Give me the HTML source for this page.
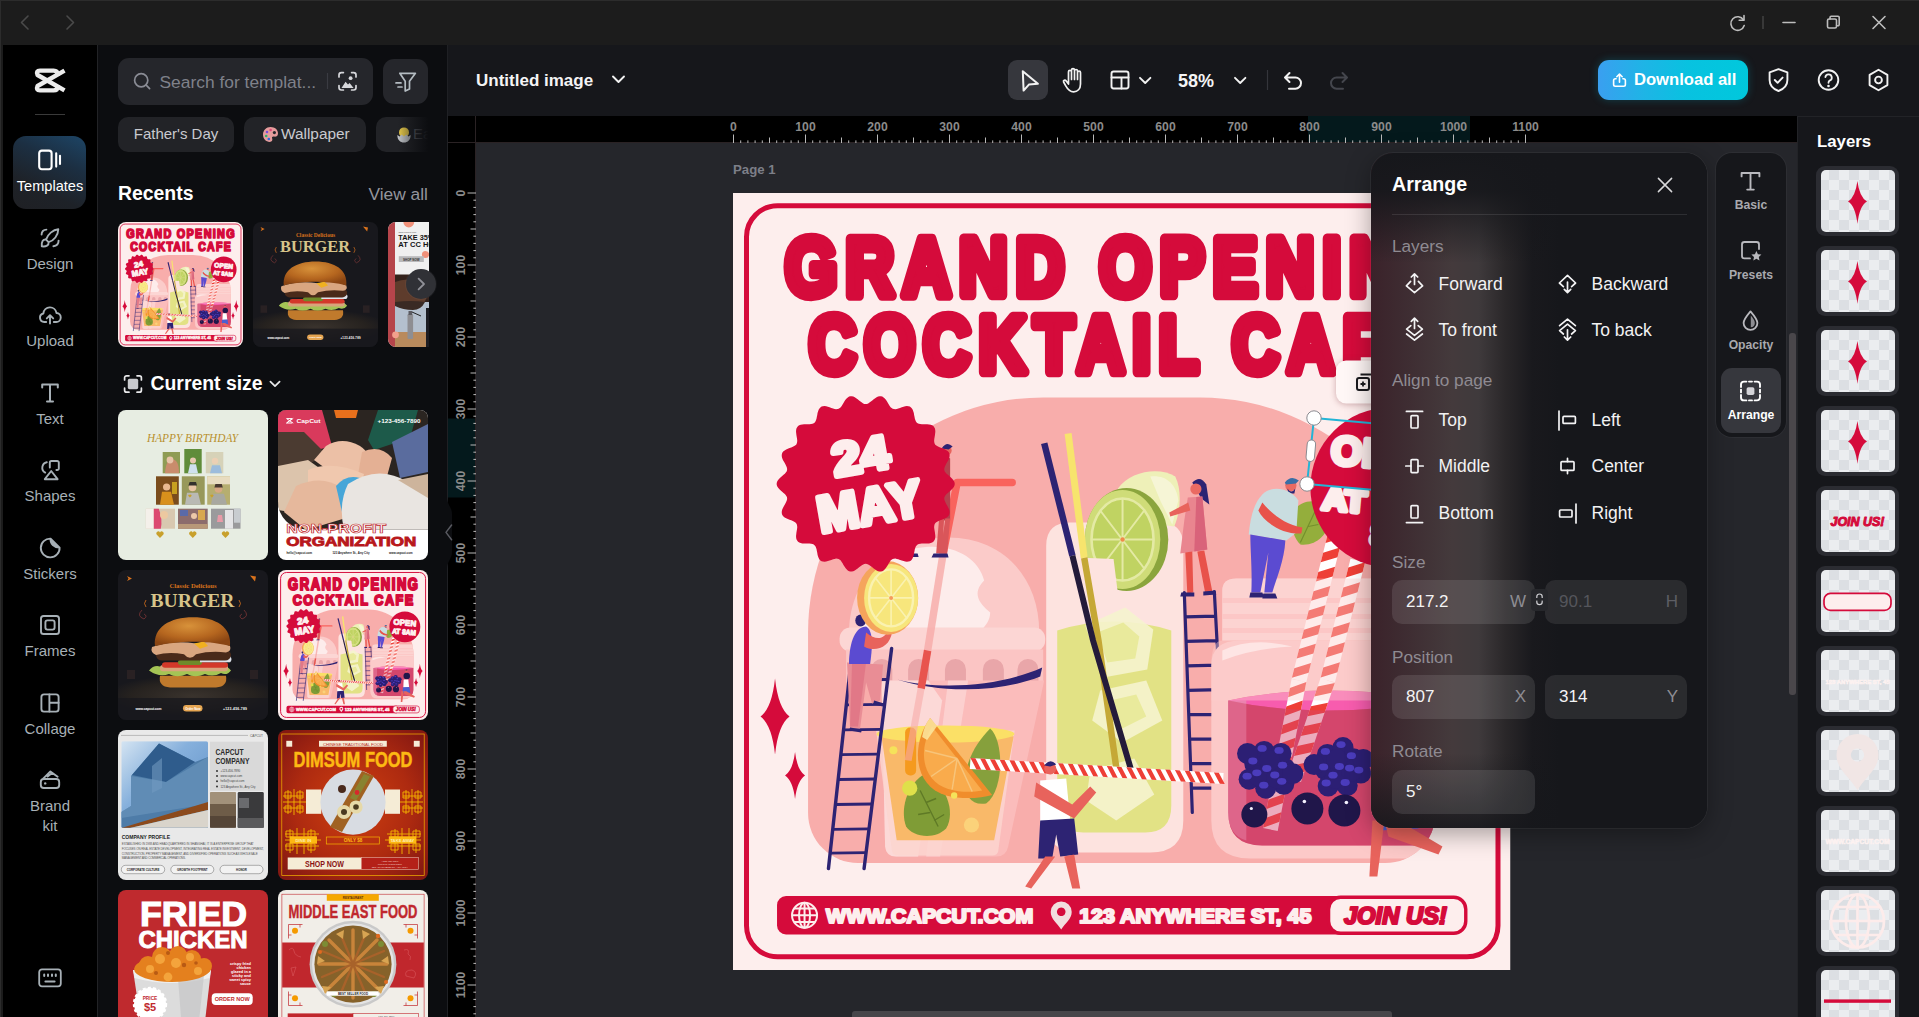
<!DOCTYPE html>
<html lang="en">
<head>
<meta charset="utf-8">
<title>Untitled image</title>
<style>
*{box-sizing:border-box;margin:0;padding:0}
html,body{width:1919px;height:1017px;overflow:hidden;background:#1c1c1c}
body{position:relative;font-family:"Liberation Sans",sans-serif;color:#fff}
.abs{position:absolute}
svg{display:block;overflow:visible}
#titlebar{left:0;top:0;width:1919px;height:45px;background:#1c1c1c;border-top:1px solid #2c2c2c}
#winl{left:0;top:0;width:1px;height:1017px;background:#2c2c2c}
#nav{left:3px;top:45px;width:94px;height:972px;background:#000}
#navb{left:97px;top:45px;width:1px;height:972px;background:#222326}
#tpl{left:98px;top:45px;width:349px;height:972px;background:#0c0d10;overflow:hidden}
#tplb{left:447px;top:45px;width:1px;height:972px;background:#1f2024}
#toolbar{left:448px;top:45px;width:1471px;height:71px;background:#16171b}
#hruler{left:448px;top:116px;width:1349px;height:27px;background:#000;overflow:hidden}
#vruler{left:448px;top:143px;width:28px;height:874px;background:#000;overflow:hidden}
#canvas{left:476px;top:143px;width:1321px;height:874px;background:#25262b;overflow:hidden}
#layers{left:1797px;top:116px;width:122px;height:901px;background:#16171b;border-left:1px solid #222327;border-top:1px solid #222327;overflow:hidden}
.navi{position:absolute;left:0;width:94px;text-align:center;font-size:15px;line-height:20px;color:#a7b0b6}
.navi svg{position:absolute;left:35px;top:-28px}
.ic{fill:none;stroke:#fff;stroke-width:1.8;stroke-linecap:round;stroke-linejoin:round}
.icg{fill:none;stroke:#a7b0b6;stroke-width:1.9;stroke-linecap:round;stroke-linejoin:round}
.chip{position:absolute;top:72px;height:35px;border-radius:10px;background:#222327;color:#c9cacf;font-size:15px;line-height:34px;white-space:nowrap}
.thumb{position:absolute;border-radius:8px;overflow:hidden}
.lt{position:absolute;left:18px;width:83px;height:70px;border-radius:9px;background:#2b2c32}
.lt i{position:absolute;left:4.5px;top:4px;width:74px;height:61.5px;border-radius:5px;overflow:hidden;background-color:#ebedf0;background-image:conic-gradient(#dcdfe3 25%,#ebedf0 0 50%,#dcdfe3 0 75%,#ebedf0 0);background-size:20px 20px;background-position:-2px 0}
.arow{position:absolute;font-size:17.5px;color:#f2f2f3;white-space:nowrap;line-height:24px}
.albl{position:absolute;left:21px;font-size:17.2px;color:#8f8b92;line-height:22px}
.ainp{position:absolute;width:143px;height:44px;border-radius:10px;background:rgba(255,255,255,.105);font-size:17px;line-height:44px;padding-left:14px;color:#f4f4f5}
.ainp b{position:absolute;right:9px;top:0;font-weight:400;color:#8e8d93;font-size:17px}
.stab{position:absolute;left:0;width:70px;text-align:center;font-size:12.2px;font-weight:700;color:#a9a9ae;line-height:16px}
</style>
</head>
<body>
<svg width="0" height="0" style="position:absolute"><defs>
<clipPath id="pclip"><rect width="777" height="777"/></clipPath>
<clipPath id="archclip"><path d="M75 439.5 A235 235 0 0 1 310 204.5 H467 A235 235 0 0 1 702 439.5 V620 A50 50 0 0 1 652 670 H125 A50 50 0 0 1 75 620Z"/></clipPath>
<symbol id="poster" viewBox="0 0 777 777"><g clip-path="url(#pclip)" font-family="Liberation Sans,sans-serif" font-weight="700">
<rect width="777" height="777" fill="#fdeeed"/>
<rect x="13.5" y="12.8" width="751" height="751" rx="31" fill="none" stroke="#d50b3b" stroke-width="5"/>
<path d="M75 439.5 A235 235 0 0 1 310 204.5 H467 A235 235 0 0 1 702 439.5 V620 A50 50 0 0 1 652 670 H125 A50 50 0 0 1 75 620Z" fill="#f8adab"/>
<g clip-path="url(#archclip)">
<path d="M116.0 439.5 C116.0 379.5 165.0 344.5 215.0 344.5 C267.0 344.5 306.0 381.5 306.0 439.5Z" fill="#fbcbc9"/>
<path d="M129.0 447.5 C119.0 403.5 143.0 363.5 182.0 355.5 C217.0 348.5 245.0 363.5 251.0 387.5 C239.0 399.5 245.0 409.5 257.0 419.5 C257.0 433.5 242.0 441.5 233.0 449.5Z" fill="#fdeceb"/>
<rect x="106.5" y="434.5" width="205.5" height="24" rx="11" fill="#fcd6d4"/>
<rect x="113" y="456.5" width="197" height="33" fill="#fbc5c4"/>
<path d="M138.2 489.5 V476.5 a10.5 10.5 0 0 1 21 0 V489.5Z M175.0 489.5 V476.5 a10.5 10.5 0 0 1 21 0 V489.5Z M211.8 489.5 V476.5 a10.5 10.5 0 0 1 21 0 V489.5Z M249.7 489.5 V476.5 a10.5 10.5 0 0 1 21 0 V489.5Z M284.3 489.5 V476.5 a10.5 10.5 0 0 1 21 0 V489.5Z " fill="#e9a6a9"/>
<path d="M148.4 487.5 L311.0 487.5 L275.0 653.5 Q273.0 663.5 263.0 663.5 L163.0 663.5 Q153.0 663.5 152.0 653.5Z" fill="#fbbcbb"/>
<path d="M148.4 487.5 L195.0 487.5 L209.0 507.5 L185.0 663.5 L163.0 663.5 Q153.0 663.5 152.0 653.5Z" fill="#fcd9d7"/>
<path d="M215.0 487.5 L235.0 487.5 L207.0 663.5 L193.0 663.5Z" fill="#fcd9d7" opacity=".7"/>
<path d="M164.0 486.5 C207.0 497.5 267.0 493.5 309.0 474.5 L307.0 483.5 C267.0 499.5 207.0 500.5 164.0 486.5Z" fill="#2d2373"/>
<path d="M143.0 537.5 L281.5 537.5 L265.0 658.5 Q264.0 662.5 259.0 662.5 L165.0 662.5 Q160.0 662.5 159.0 658.5Z" fill="#fcd5cf" opacity=".85"/>
<path d="M148.4 543.3 L280.5 543.3 L261.0 647.2 L163.6 647.2Z" fill="#f9b969"/>
<ellipse cx="212.29999999999995" cy="541.0" rx="69" ry="8.6" fill="#fbe066"/>
<path d="M257.0 535.5 C271.0 547.5 271.0 597.5 253.0 610.5 C235.0 613.5 229.0 597.5 233.0 577.5 C237.0 559.5 247.0 545.5 257.0 535.5Z" fill="#86a03c"/>
<rect x="172" y="534.5" width="11" height="48" rx="5" fill="#f59a1e"/>
<path d="M189.0 582.5 C213.0 587.5 223.0 619.5 213.0 635.5 C201.0 647.5 179.0 643.5 173.0 633.5 C167.0 617.5 173.0 593.5 189.0 582.5Z" fill="#7f9c36"/>
<path d="M187.0 597.5 L205.0 633.5 M193.0 609.5 l10 -4 M197.0 619.5 l-12 2 M201.0 627.5 l10 -6" stroke="#5f7a26" stroke-width="1.4" fill="none"/>
<path d="M197.0 524.9 C177.0 552.5 181.0 593.5 213.0 602.5 C229.0 606.5 247.0 605.5 259.0 602.0Z" fill="#f08d2c"/>
<path d="M199.0 533.5 C185.0 555.5 188.0 587.5 215.0 596.0 C227.0 599.5 239.0 599.5 249.0 597.5Z" fill="#f9ab4c"/>
<path d="M224.0 565.5 L192.0 557.5 M224.0 565.5 L198.0 583.5 M224.0 565.5 L219.0 596.5 M224.0 565.5 L239.0 598.5" stroke="#f7c47a" stroke-width="1.5" fill="none"/>
<path d="M197.0 524.9 l7 8 l-10 14 l-5 -3 q2 -12 8 -19Z" fill="#fce7a0" opacity=".85"/>
<circle cx="160.29999999999995" cy="557.3" r="4" fill="#f5e25a"/><circle cx="176.60000000000002" cy="595.2" r="7.6" fill="#dfe04a"/><circle cx="221" cy="602.5" r="3.2" fill="#f5e25a"/><circle cx="238.29999999999995" cy="632.0" r="7.6" fill="#fbd27a"/>
<path d="M279.0 289.5 H224 L210.0 360.5" fill="none" stroke="#f9635d" stroke-width="7.5" stroke-linecap="round" stroke-linejoin="round"/>
<path d="M210.0 360.5 L194.5 457.5" fill="none" stroke="#f6aaa8" stroke-width="7.5" opacity=".8"/>
<path d="M194.5 457.5 L188.0 495.5" fill="none" stroke="#e8544e" stroke-width="7.5"/>
<path d="M188.0 495.5 L175.0 567.5" fill="none" stroke="#f6aaa8" stroke-width="7" opacity=".6"/>
<path d="M313.0 352.5 Q313.0 329.5 337.0 329.5 H427 Q450 329.5 450 352.5 V627.5 Q450 659.5 417 659.5 H347 Q313 659.5 313 627.5Z" fill="#fde3df"/>
<path d="M324.0 437.5 Q381.0 419.5 438.0 437.5 V612.5 Q438 639.5 412 639.5 H350 Q324 639.5 324 612.5Z" fill="#e2e285"/>
<g fill="#f6f4cf" opacity=".9"><path d="M352.0 432.5 l40 -18 l28 22 l-6 40 l-44 8Z"/><path d="M367.0 497.5 l46 -10 l16 40 l-40 22 l-30 -22Z"/><path d="M357.0 577.5 l44 -12 l20 36 l-38 26 l-30 -20Z"/></g>
<g fill="#e9ea9c"><path d="M364.0 439.5 l26 -10 l16 14 l-4 22 l-28 4Z"/><path d="M377.0 507.5 l26 -6 l10 22 l-24 12 l-16 -12Z"/></g>
<path d="M384.7 295.5 C397.0 277.5 427.0 273.5 442.0 283.5 C449.0 297.5 447.0 319.5 441.0 333.5 L397.0 327.5Z" fill="#eef0b8"/>
<path d="M417.0 283.5 C431.0 281.5 443.0 289.5 445.0 307.5 L439.0 331.5 L427.0 307.5Z" fill="#f6f5d6"/>
<ellipse cx="393.29999999999995" cy="346.5" rx="41.7" ry="51.4" fill="#8ba53d"/>
<ellipse cx="389.29999999999995" cy="346.5" rx="37.7" ry="49.4" fill="#cfdc78"/>
<ellipse cx="389.29999999999995" cy="346.5" rx="31" ry="41" fill="#c0d362" stroke="#e4eaa4" stroke-width="2.6"/>
<path d="M389.3 305.5 V387.5 M358.0 346.5 H420 M367.0 317.5 L411.0 375.5 M411.0 317.5 L367.0 375.5" stroke="#e4eaa4" stroke-width="2"/>
<circle cx="389.29999999999995" cy="346.5" r="2.2" fill="#f08a4a"/>
<path d="M343.0 364.5 L380.3 366.0 L385.0 403.5 L343.0 403.5Z" fill="#fde3df"/>
<path d="M334.9 240.5 L351.0 364.9" stroke="#f7e46d" stroke-width="7"/>
<path d="M351.0 364.9 L365.2 447.5 L383.0 574.5" stroke="#c5a836" stroke-width="6.5" fill="none"/>
<path d="M311.0 250.2 L339.2 362.8" stroke="#2d2373" stroke-width="6.5"/>
<path d="M339.2 362.8 L359.8 447.5 L398.0 577.5" stroke="#241b3a" stroke-width="6" fill="none"/>
<g><path d="M459.0 289.5 q8 -8 14 2 l3 20 l-8 -6Z" fill="#2d2373"/><circle cx="462.5999999999999" cy="296.0" r="5.6" fill="#ea6a62"/><path d="M454.5 304.5 L469.0 303.5 L474.0 356.5 L447.0 360.5 L451.0 327.5Z" fill="#e9858f"/><path d="M463.0 304.0 L469.0 303.5 L474.0 356.5 L461.0 358.5Z" fill="#d9637a"/><path d="M455.0 309.5 L436.0 319.5 l1 4 l20 -6Z" fill="#e8635c"/><path d="M452.0 359.5 l7 -1 l1 41 l-6 1Z M464.0 358.5 l7 -1 l8 41 l-7 2Z" fill="#e8524a"/><path d="M448.0 399.5 l13 0 l0 4 l-14 0Z M470.0 398.5 l12 -1 l1 4 l-13 1Z" fill="#2d2373"/></g>
<g stroke="#2d2373" stroke-width="3.2" stroke-linecap="round" fill="none"><path d="M459.0 619.5 L451.0 399.5 M493.0 619.5 L481.0 398.5 M458.1 595.1 L491.7 594.9 M457.2 570.6 L490.3 570.4 M456.3 546.2 L489.0 545.8 M455.4 521.7 L487.7 521.3 M454.6 497.3 L486.3 496.7 M453.7 472.8 L485.0 472.2 M452.8 448.4 L483.7 447.6 M451.9 423.9 L482.3 423.1"/></g>
<path d="M489.0 397.5 Q489.0 385.5 503.0 385.5 H707 V447.5 H489Z" fill="#fcd6d4"/>
<path d="M489.0 407.5 H707 M489.0 423.5 H707 M489.0 437.5 H707" stroke="#fbc2c1" stroke-width="5"/>
<path d="M478.0 472.5 Q478.0 447.5 507.0 447.5 H717 V665.5 H517 Q478 665.5 478 627.5Z" fill="#fcc9c8"/>
<path d="M495.0 507.5 Q587.0 487.5 707.0 507.5 V652.5 H529 Q495 652.5 495 619.5Z" fill="#d4466c"/>
<path d="M495.0 507.5 Q587.0 487.5 707.0 507.5 Q587.0 527.5 495.0 507.5Z" fill="#f75cae"/>
<path d="M495.0 507.5 h18 V647.5 Q495 642.5 495 619.5Z" fill="#e88db0" opacity=".8"/>
<path d="M489.0 457.5 q30 -14 70 -4 q-40 2 -70 14Z" fill="#fff" opacity=".8"/>
<g transform="translate(604.0,333.5) rotate(104.00)" opacity="1"><rect x="0" y="-7.5" width="158.7" height="15" fill="#fff"/><path d="M0.0 -7.5 l9.9 0 l9.0 15 l-9.9 0Z M19.8 -7.5 l9.9 0 l9.0 15 l-9.9 0Z M39.7 -7.5 l9.9 0 l9.0 15 l-9.9 0Z M59.5 -7.5 l9.9 0 l9.0 15 l-9.9 0Z M79.4 -7.5 l9.9 0 l9.0 15 l-9.9 0Z M99.2 -7.5 l9.9 0 l9.0 15 l-9.9 0Z M119.0 -7.5 l9.9 0 l9.0 15 l-9.9 0Z M138.9 -7.5 l9.9 0 l9.0 15 l-9.9 0Z " fill="#ee3f36"/></g>
<g transform="translate(565.6,487.5) rotate(100.87)" opacity="1"><rect x="0" y="-7.5" width="151.7" height="15" fill="#fff"/><path d="M0.0 -7.5 l9.5 0 l9.0 15 l-9.5 0Z M19.0 -7.5 l9.5 0 l9.0 15 l-9.5 0Z M37.9 -7.5 l9.5 0 l9.0 15 l-9.5 0Z M56.9 -7.5 l9.5 0 l9.0 15 l-9.5 0Z M75.9 -7.5 l9.5 0 l9.0 15 l-9.5 0Z M94.8 -7.5 l9.5 0 l9.0 15 l-9.5 0Z M113.8 -7.5 l9.5 0 l9.0 15 l-9.5 0Z M132.8 -7.5 l9.5 0 l9.0 15 l-9.5 0Z " fill="#ee3f36"/></g>
<g transform="translate(624.4,367.5) rotate(104.08)" opacity="1"><rect x="0" y="-7.5" width="123.7" height="15" fill="#fff"/><path d="M0.0 -7.5 l10.3 0 l9.0 15 l-10.3 0Z M20.6 -7.5 l10.3 0 l9.0 15 l-10.3 0Z M41.2 -7.5 l10.3 0 l9.0 15 l-10.3 0Z M61.9 -7.5 l10.3 0 l9.0 15 l-10.3 0Z M82.5 -7.5 l10.3 0 l9.0 15 l-10.3 0Z M103.1 -7.5 l10.3 0 l9.0 15 l-10.3 0Z " fill="#ee3f36"/></g>
<g transform="translate(594.3,487.5) rotate(108.85)" opacity="1"><rect x="0" y="-7.5" width="104.6" height="15" fill="#fff"/><path d="M0.0 -7.5 l10.5 0 l9.0 15 l-10.5 0Z M20.9 -7.5 l10.5 0 l9.0 15 l-10.5 0Z M41.8 -7.5 l10.5 0 l9.0 15 l-10.5 0Z M62.8 -7.5 l10.5 0 l9.0 15 l-10.5 0Z M83.7 -7.5 l10.5 0 l9.0 15 l-10.5 0Z " fill="#ee3f36"/></g>
<path d="M489.0 397.5 Q489.0 385.5 503.0 385.5 H707 V507.5 H478 V472.5 Q478.0 447.5 489.0 447.5Z" fill="#fcd0ce" opacity=".42"/>
<path d="M495.0 507.5 Q587.0 527.5 707.0 507.5 V652.5 H529 Q495 652.5 495 619.5Z" fill="#d4466c" opacity=".45"/>
<g fill="#2c1f74"><circle cx="535.4" cy="578.5" r="10.5"/><circle cx="521.5" cy="571.0" r="10.5"/><circle cx="551.2" cy="575.2" r="10.5"/><circle cx="530.8" cy="558.4" r="10.5"/><circle cx="547.7" cy="560.4" r="10.5"/><circle cx="515.8" cy="586.2" r="10.5"/><circle cx="550.4" cy="591.3" r="10.5"/><circle cx="532.4" cy="595.2" r="10.5"/><circle cx="525.5" cy="582.8" r="10.5"/><circle cx="543.4" cy="585.0" r="10.5"/><circle cx="536.3" cy="567.5" r="10.5"/><circle cx="514.2" cy="560.5" r="10.5"/><circle cx="559.4" cy="580.7" r="10.5"/></g><g fill="#4b3cbc"><ellipse cx="533.4" cy="575.5" rx="4.6" ry="3.4"/><ellipse cx="519.5" cy="568.0" rx="4.6" ry="3.4"/><ellipse cx="549.2" cy="572.2" rx="4.6" ry="3.4"/><ellipse cx="528.8" cy="555.4" rx="4.6" ry="3.4"/><ellipse cx="545.7" cy="557.4" rx="4.6" ry="3.4"/><ellipse cx="513.8" cy="583.2" rx="4.6" ry="3.4"/><ellipse cx="548.4" cy="588.3" rx="4.6" ry="3.4"/><ellipse cx="530.4" cy="592.2" rx="4.6" ry="3.4"/><ellipse cx="523.5" cy="579.8" rx="4.6" ry="3.4"/><ellipse cx="541.4" cy="582.0" rx="4.6" ry="3.4"/></g>
<g fill="#2c1f74"><circle cx="608.0" cy="576.5" r="10.5"/><circle cx="592.2" cy="576.9" r="10.5"/><circle cx="620.0" cy="565.7" r="10.5"/><circle cx="594.0" cy="561.4" r="10.5"/><circle cx="609.6" cy="554.6" r="10.5"/><circle cx="594.8" cy="593.0" r="10.5"/><circle cx="627.4" cy="580.1" r="10.5"/><circle cx="613.8" cy="592.5" r="10.5"/><circle cx="601.6" cy="585.2" r="10.5"/><circle cx="618.2" cy="578.1" r="10.5"/><circle cx="603.3" cy="566.5" r="10.5"/><circle cx="580.7" cy="571.6" r="10.5"/><circle cx="629.9" cy="566.4" r="10.5"/></g><g fill="#4b3cbc"><ellipse cx="606.0" cy="573.5" rx="4.6" ry="3.4"/><ellipse cx="590.2" cy="573.9" rx="4.6" ry="3.4"/><ellipse cx="618.0" cy="562.7" rx="4.6" ry="3.4"/><ellipse cx="592.0" cy="558.4" rx="4.6" ry="3.4"/><ellipse cx="607.6" cy="551.6" rx="4.6" ry="3.4"/><ellipse cx="592.8" cy="590.0" rx="4.6" ry="3.4"/><ellipse cx="625.4" cy="577.1" rx="4.6" ry="3.4"/><ellipse cx="611.8" cy="589.5" rx="4.6" ry="3.4"/><ellipse cx="599.6" cy="582.2" rx="4.6" ry="3.4"/><ellipse cx="616.2" cy="575.1" rx="4.6" ry="3.4"/></g>
<g fill="#20164a"><circle cx="521" cy="621.5" r="13"/><circle cx="574" cy="615.5" r="16"/><circle cx="611" cy="617.5" r="16"/></g>
<g fill="#f4f2ff"><circle cx="518" cy="615.5" r="1.6"/><circle cx="571" cy="608.5" r="1.8"/><circle cx="613" cy="609.5" r="1.8"/></g>
<g><path d="M559.0 319.5 C567.0 305.5 589.0 303.5 595.0 319.5 C599.0 337.5 585.0 353.5 567.0 351.5 C559.0 343.5 557.0 331.5 559.0 319.5Z" fill="#94ae3c"/><path d="M567.0 349.5 L583.0 315.5 M575.0 333.5 l10 -2" stroke="#74902c" stroke-width="1.2" fill="none"/><circle cx="557.5" cy="292.5" r="5.6" fill="#ea6a62"/><path d="M551.5 289.5 q6 -8 14 -2 l-3 3 l-10 1Z" fill="#3a6ea5"/><path d="M554.0 295.5 q4 6 8 0 l-1 5 l-6 0Z" fill="#2d2373"/><path d="M529.0 301.5 C539.0 291.5 557.0 295.5 565.0 307.5 L563.0 339.5 L553.0 347.5 L515.4 341.5 C517.0 323.5 521.0 309.5 529.0 301.5Z" fill="#c9dde0"/><path d="M529.0 309.5 C537.0 319.5 551.0 331.5 569.0 334.5 l-1 6 C549.0 341.5 531.0 329.5 525.0 317.5Z" fill="#e8524a"/><path d="M517.0 341.5 L552.0 347.5 C551.0 367.5 543.0 385.5 539.0 399.5 L531.0 399.5 L535.0 359.5 L527.0 399.5 L518.0 399.5 C519.0 377.5 517.0 357.5 517.0 341.5Z" fill="#5b4bd1"/><path d="M517.0 399.5 l12 0 l2 5 l-15 0Z M530.0 400.5 l12 0 l2 5 l-15 0Z" fill="#2d2373"/></g>
</g>
<path d="M95.4 675.5 L118.6 462.5 M131.0 675.5 L158.5 455.5" stroke="#2d2373" stroke-width="3.4" stroke-linecap="round" fill="none"/>
<path d="M115.9 487.0 L154.5 486.5 M113.2 511.9 L151.4 511.4 M110.5 536.8 L148.3 536.3 M107.8 561.7 L145.2 561.2 M105.1 586.5 L142.1 586.0 M102.3 611.5 L139.0 611.0 M99.6 636.3 L135.9 635.8 M97.1 660.1 L132.9 659.6 " stroke="#2d2373" stroke-width="2.8" fill="none"/>
<g><path d="M114.0 469.5 L150.0 471.5 L147.0 507.5 L139.0 510.5 L133.0 489.5 L127.0 535.5 L117.0 535.5 Z" fill="#e98d95"/><path d="M119.0 469.5 l14 0 l-8 64 l-8 0Z" fill="#dc6a7e" opacity=".6"/><path d="M116.0 471.0 C116.0 447.5 123.0 433.5 133.0 433.5 C141.0 437.5 139.0 457.5 137.0 471.0Z" fill="#5b4bd1"/><path d="M133.0 439.5 C143.0 447.5 151.0 447.5 156.0 435.5 l3 3 C157.0 455.5 141.0 459.5 131.0 453.5Z" fill="#e8635c"/><ellipse cx="127.60000000000002" cy="427.5" rx="5.4" ry="6" fill="#2d2373"/><path d="M141.0 507.5 l10 3 l-1 3 l-10 -2Z M117.0 534.5 l12 2 l-1 3 l-12 -2Z" fill="#2d2373"/></g>
<ellipse cx="154.5" cy="404.9" rx="30.5" ry="36.8" fill="#f5a45c"/><ellipse cx="158" cy="404.9" rx="27" ry="34" fill="#f7e67c"/><ellipse cx="158" cy="404.9" rx="22" ry="28.5" fill="none" stroke="#faf2b0" stroke-width="2.4"/><path d="M158.0 376.5 V433.5 M136.0 404.9 H180 M142.0 384.5 L174.0 425.5 M174.0 384.5 L142.0 425.5" stroke="#faf2b0" stroke-width="1.6"/><circle cx="158" cy="404.9" r="2" fill="#f59a5a"/>
<g><path d="M206.0 265.5 q6 -4 11 0 l0 62 l-11 0Z" fill="#b5404e"/><path d="M206.0 325.5 l5 0 l-2 35 l-6 0Z M212.0 325.5 l5 0 l-3 35 l-6 0Z" fill="#d9565a"/><circle cx="213.5" cy="257.5" r="5" fill="#e8635c"/><path d="M208.5 255.5 q5 -8 11 -2 l-4 3Z" fill="#2d2373"/><path d="M170.5 360.5 l14 0 l1 3.6 l-17 0Z M200.4 360.5 l14 0 l1 4 l-17 0Z" fill="#2d2373"/></g>
<g transform="translate(237.0,570.5) rotate(3.39)" opacity="1"><rect x="0" y="-5.5" width="253.4" height="11" fill="#fff"/><path d="M0.0 -5.5 l4.9 0 l6.6 11 l-4.9 0Z M9.7 -5.5 l4.9 0 l6.6 11 l-4.9 0Z M19.5 -5.5 l4.9 0 l6.6 11 l-4.9 0Z M29.2 -5.5 l4.9 0 l6.6 11 l-4.9 0Z M39.0 -5.5 l4.9 0 l6.6 11 l-4.9 0Z M48.7 -5.5 l4.9 0 l6.6 11 l-4.9 0Z M58.5 -5.5 l4.9 0 l6.6 11 l-4.9 0Z M68.2 -5.5 l4.9 0 l6.6 11 l-4.9 0Z M78.0 -5.5 l4.9 0 l6.6 11 l-4.9 0Z M87.7 -5.5 l4.9 0 l6.6 11 l-4.9 0Z M97.5 -5.5 l4.9 0 l6.6 11 l-4.9 0Z M107.2 -5.5 l4.9 0 l6.6 11 l-4.9 0Z M117.0 -5.5 l4.9 0 l6.6 11 l-4.9 0Z M126.7 -5.5 l4.9 0 l6.6 11 l-4.9 0Z M136.5 -5.5 l4.9 0 l6.6 11 l-4.9 0Z M146.2 -5.5 l4.9 0 l6.6 11 l-4.9 0Z M156.0 -5.5 l4.9 0 l6.6 11 l-4.9 0Z M165.7 -5.5 l4.9 0 l6.6 11 l-4.9 0Z M175.5 -5.5 l4.9 0 l6.6 11 l-4.9 0Z M185.2 -5.5 l4.9 0 l6.6 11 l-4.9 0Z M195.0 -5.5 l4.9 0 l6.6 11 l-4.9 0Z M204.7 -5.5 l4.9 0 l6.6 11 l-4.9 0Z M214.5 -5.5 l4.9 0 l6.6 11 l-4.9 0Z M224.2 -5.5 l4.9 0 l6.6 11 l-4.9 0Z M233.9 -5.5 l4.9 0 l6.6 11 l-4.9 0Z M243.7 -5.5 l4.9 0 l6.6 11 l-4.9 0Z " fill="#ee3f36"/></g>
<g><circle cx="317" cy="575.5" r="6" fill="#e8635c"/><path d="M311.0 572.5 q6 -8 12 -1 l-6 2Z" fill="#2d2373"/><path d="M307.0 587.5 l26 -2 l4 42 l-30 2Z" fill="#fff"/><path d="M303.0 589.5 l36 22 l18 -18 l6 6 l-22 26 l-40 -22Z" fill="#e8635c"/><path d="M307.0 627.5 l34 -2 l4 36 l-18 2 l-4 -22 l-4 24 l-14 0Z" fill="#2d2373"/><path d="M312.0 663.5 l10 0 l-24 32 l-6 -2Z M331.0 663.5 l10 -2 l6 34 l-8 0Z" fill="#e8635c"/></g>
<g><circle cx="667" cy="549.5" r="17" fill="#20164a"/><circle cx="665" cy="523.5" r="7" fill="#e8635c"/><path d="M659.0 519.5 q6 -8 13 -1 l-6 2Z" fill="#2d2373"/><path d="M651.0 567.5 l24 0 l4 40 l-30 2Z" fill="#fff"/><path d="M647.0 607.5 l34 -2 l4 30 l-40 2Z" fill="#4b5fd0"/></g>
<g fill="#e8635c"><path d="M651.0 627.5 l14 0 l44 26 l-4 8 l-50 -18Z"/><path d="M639.0 627.5 l12 0 l-7 56 l-8 0Z"/></g>
<path d="M42 485.5 Q45.19 515.14 56.5 523.5 Q45.19 531.86 42 561.5 Q38.81 531.86 27.5 523.5 Q38.81 515.14 42 485.5Z" fill="#d50b3b"/><path d="M62 559.0 Q64.2 577.33 72 582.5 Q64.2 587.67 62 606.0 Q59.8 587.67 52 582.5 Q59.8 577.33 62 559.0Z" fill="#d50b3b"/>
<path d="M735 485.5 Q738.19 515.14 749.5 523.5 Q738.19 531.86 735 561.5 Q731.81 531.86 720.5 523.5 Q731.81 515.14 735 485.5Z" fill="#d50b3b"/><path d="M715 559.0 Q717.2 577.33 725 582.5 Q717.2 587.67 715 606.0 Q712.8 587.67 705 582.5 Q712.8 577.33 715 559.0Z" fill="#d50b3b"/>
<text x="392.5" y="102.3" font-size="82" letter-spacing="10" textLength="681" stroke="#d50b3b" stroke-width="10.5" stroke-linejoin="round" stroke-linecap="round" fill="#d50b3b" text-anchor="middle" lengthAdjust="spacingAndGlyphs">GRAND OPENING</text>
<text x="392.5" y="178.8" font-size="80" letter-spacing="10" textLength="633" stroke="#d50b3b" stroke-width="10.5" stroke-linejoin="round" stroke-linecap="round" fill="#d50b3b" text-anchor="middle" lengthAdjust="spacingAndGlyphs">COCKTAIL CAFE</text>
<path d="M221.6 290.9 L221.4 292.3 L220.8 293.7 L219.9 295.0 L218.8 296.3 L217.5 297.6 L216.1 298.8 L214.7 300.0 L213.4 301.1 L212.4 302.3 L211.6 303.4 L211.2 304.6 L211.1 305.9 L211.4 307.2 L211.9 308.6 L212.6 310.1 L213.5 311.7 L214.4 313.3 L215.3 314.9 L216.0 316.5 L216.4 318.1 L216.5 319.6 L216.3 321.0 L215.8 322.3 L214.8 323.5 L213.6 324.4 L212.1 325.3 L210.4 326.0 L208.7 326.7 L207.0 327.3 L205.4 328.0 L204.0 328.7 L202.8 329.5 L201.9 330.4 L201.4 331.6 L201.1 332.9 L201.0 334.3 L201.2 336.0 L201.5 337.7 L201.8 339.5 L202.0 341.3 L202.2 343.1 L202.1 344.8 L201.8 346.3 L201.1 347.6 L200.2 348.7 L199.0 349.5 L197.6 350.0 L195.9 350.4 L194.1 350.5 L192.3 350.6 L190.4 350.6 L188.7 350.6 L187.1 350.8 L185.7 351.1 L184.5 351.6 L183.5 352.4 L182.7 353.5 L182.2 354.8 L181.7 356.3 L181.4 358.0 L181.0 359.8 L180.7 361.7 L180.2 363.4 L179.6 365.0 L178.8 366.4 L177.9 367.4 L176.7 368.2 L175.3 368.6 L173.8 368.7 L172.1 368.5 L170.4 368.1 L168.7 367.5 L166.9 366.9 L165.2 366.3 L163.7 365.9 L162.2 365.6 L160.8 365.7 L159.6 366.0 L158.5 366.7 L157.5 367.6 L156.6 368.9 L155.7 370.3 L154.8 371.9 L153.8 373.5 L152.8 375.0 L151.7 376.3 L150.5 377.4 L149.2 378.2 L147.9 378.6 L146.5 378.6 L145.0 378.2 L143.5 377.5 L142.1 376.6 L140.6 375.5 L139.2 374.3 L137.8 373.2 L136.4 372.2 L135.1 371.4 L133.9 370.9 L132.6 370.7 L131.3 370.9 L130.1 371.4 L128.8 372.2 L127.4 373.2 L126.0 374.3 L124.6 375.5 L123.1 376.6 L121.7 377.5 L120.2 378.2 L118.7 378.6 L117.3 378.6 L116.0 378.2 L114.7 377.4 L113.5 376.3 L112.4 375.0 L111.4 373.5 L110.4 371.9 L109.5 370.3 L108.6 368.9 L107.7 367.6 L106.7 366.7 L105.6 366.0 L104.4 365.7 L103.0 365.6 L101.5 365.9 L100.0 366.3 L98.3 366.9 L96.5 367.5 L94.8 368.1 L93.1 368.5 L91.4 368.7 L89.9 368.6 L88.5 368.2 L87.3 367.4 L86.4 366.4 L85.6 365.0 L85.0 363.4 L84.5 361.7 L84.2 359.8 L83.8 358.0 L83.5 356.3 L83.0 354.8 L82.5 353.5 L81.7 352.4 L80.7 351.6 L79.5 351.1 L78.1 350.8 L76.5 350.6 L74.8 350.6 L72.9 350.6 L71.1 350.5 L69.3 350.4 L67.6 350.0 L66.2 349.5 L65.0 348.7 L64.1 347.6 L63.4 346.3 L63.1 344.8 L63.0 343.1 L63.2 341.3 L63.4 339.5 L63.7 337.7 L64.0 336.0 L64.2 334.3 L64.1 332.9 L63.8 331.6 L63.3 330.4 L62.4 329.5 L61.2 328.7 L59.8 328.0 L58.2 327.3 L56.5 326.7 L54.8 326.0 L53.1 325.3 L51.6 324.4 L50.4 323.5 L49.4 322.3 L48.9 321.0 L48.7 319.6 L48.8 318.1 L49.2 316.5 L49.9 314.9 L50.8 313.3 L51.7 311.7 L52.6 310.1 L53.3 308.6 L53.8 307.2 L54.1 305.9 L54.0 304.6 L53.6 303.4 L52.8 302.3 L51.8 301.1 L50.5 300.0 L49.1 298.8 L47.7 297.6 L46.4 296.3 L45.3 295.0 L44.4 293.7 L43.8 292.3 L43.6 290.9 L43.8 289.5 L44.4 288.1 L45.3 286.8 L46.4 285.5 L47.7 284.2 L49.1 283.0 L50.5 281.8 L51.8 280.7 L52.8 279.5 L53.6 278.4 L54.0 277.2 L54.1 275.9 L53.8 274.6 L53.3 273.2 L52.6 271.7 L51.7 270.1 L50.8 268.5 L49.9 266.9 L49.2 265.3 L48.8 263.7 L48.7 262.2 L48.9 260.8 L49.4 259.5 L50.4 258.3 L51.6 257.4 L53.1 256.5 L54.8 255.8 L56.5 255.1 L58.2 254.5 L59.8 253.8 L61.2 253.1 L62.4 252.3 L63.3 251.4 L63.8 250.2 L64.1 248.9 L64.2 247.5 L64.0 245.8 L63.7 244.1 L63.4 242.3 L63.2 240.5 L63.0 238.7 L63.1 237.0 L63.4 235.5 L64.1 234.2 L65.0 233.1 L66.2 232.3 L67.6 231.8 L69.3 231.4 L71.1 231.3 L72.9 231.2 L74.8 231.2 L76.5 231.2 L78.1 231.0 L79.5 230.7 L80.7 230.2 L81.7 229.4 L82.5 228.3 L83.0 227.0 L83.5 225.5 L83.8 223.8 L84.2 222.0 L84.5 220.1 L85.0 218.4 L85.6 216.8 L86.4 215.4 L87.3 214.4 L88.5 213.6 L89.9 213.2 L91.4 213.1 L93.1 213.3 L94.8 213.7 L96.5 214.3 L98.3 214.9 L100.0 215.5 L101.5 215.9 L103.0 216.2 L104.4 216.1 L105.6 215.8 L106.7 215.1 L107.7 214.2 L108.6 212.9 L109.5 211.5 L110.4 209.9 L111.4 208.3 L112.4 206.8 L113.5 205.5 L114.7 204.4 L116.0 203.6 L117.3 203.2 L118.7 203.2 L120.2 203.6 L121.7 204.3 L123.1 205.2 L124.6 206.3 L126.0 207.5 L127.4 208.6 L128.8 209.6 L130.1 210.4 L131.3 210.9 L132.6 211.1 L133.9 210.9 L135.1 210.4 L136.4 209.6 L137.8 208.6 L139.2 207.5 L140.6 206.3 L142.1 205.2 L143.5 204.3 L145.0 203.6 L146.5 203.2 L147.9 203.2 L149.2 203.6 L150.5 204.4 L151.7 205.5 L152.8 206.8 L153.8 208.3 L154.8 209.9 L155.7 211.5 L156.6 212.9 L157.5 214.2 L158.5 215.1 L159.6 215.8 L160.8 216.1 L162.2 216.2 L163.7 215.9 L165.2 215.5 L166.9 214.9 L168.7 214.3 L170.4 213.7 L172.1 213.3 L173.8 213.1 L175.3 213.2 L176.7 213.6 L177.9 214.4 L178.8 215.4 L179.6 216.8 L180.2 218.4 L180.7 220.1 L181.0 222.0 L181.4 223.8 L181.7 225.5 L182.2 227.0 L182.7 228.3 L183.5 229.4 L184.5 230.2 L185.7 230.7 L187.1 231.0 L188.7 231.2 L190.4 231.2 L192.3 231.2 L194.1 231.3 L195.9 231.4 L197.6 231.8 L199.0 232.3 L200.2 233.1 L201.1 234.2 L201.8 235.5 L202.1 237.0 L202.2 238.7 L202.0 240.5 L201.8 242.3 L201.5 244.1 L201.2 245.8 L201.0 247.5 L201.1 248.9 L201.4 250.2 L201.9 251.4 L202.8 252.3 L204.0 253.1 L205.4 253.8 L207.0 254.5 L208.7 255.1 L210.4 255.8 L212.1 256.5 L213.6 257.4 L214.8 258.3 L215.8 259.5 L216.3 260.8 L216.5 262.2 L216.4 263.7 L216.0 265.3 L215.3 266.9 L214.4 268.5 L213.5 270.1 L212.6 271.7 L211.9 273.2 L211.4 274.6 L211.1 275.9 L211.2 277.2 L211.6 278.4 L212.4 279.5 L213.4 280.7 L214.7 281.8 L216.1 283.0 L217.5 284.2 L218.8 285.5 L219.9 286.8 L220.8 288.1 L221.4 289.5Z" fill="#d50b3b"/>
<text transform="translate(127.5 262.9) rotate(-10)" x="0" y="16" font-size="46.5" textLength="57" stroke="#fdeeed" stroke-width="5.6" stroke-linejoin="round" fill="#fdeeed" text-anchor="middle" lengthAdjust="spacingAndGlyphs">24</text><text transform="translate(136.4 313.3) rotate(-10)" x="0" y="17.7" font-size="51.3" textLength="105" stroke="#fdeeed" stroke-width="5.6" stroke-linejoin="round" fill="#fdeeed" text-anchor="middle" lengthAdjust="spacingAndGlyphs">MAY</text>
<circle cx="657" cy="294.5" r="80" fill="#d50b3b"/>
<g style="display:var(--thumbtxt,inline)" transform="rotate(5 655 296)"><text x="655" y="287" font-size="42" textLength="118" stroke="#fdeeed" stroke-width="5" stroke-linejoin="round" fill="#fdeeed" text-anchor="middle" lengthAdjust="spacingAndGlyphs">OPEN</text><text x="655" y="334" font-size="38" textLength="124" stroke="#fdeeed" stroke-width="5" stroke-linejoin="round" fill="#fdeeed" text-anchor="middle" lengthAdjust="spacingAndGlyphs">AT 8AM</text></g>
<g style="display:var(--maintxt,none)"><text transform="translate(596.5 270.6) rotate(5)" x="0" y="0" font-size="40" textLength="114" stroke="#fdeeed" stroke-width="5" stroke-linejoin="round" fill="#fdeeed" text-anchor="start" lengthAdjust="spacingAndGlyphs">OPEN</text><text transform="translate(588 316) rotate(5)" x="0" y="0" font-size="30.5" textLength="44" stroke="#fdeeed" stroke-width="5" stroke-linejoin="round" fill="#fdeeed" text-anchor="start" lengthAdjust="spacingAndGlyphs">AT</text><text transform="translate(636 352) rotate(5)" x="0" y="0" font-size="30.5" textLength="70" stroke="#fdeeed" stroke-width="5" stroke-linejoin="round" fill="#fdeeed" text-anchor="start" lengthAdjust="spacingAndGlyphs">8AM</text></g>
<rect x="44" y="703" width="580" height="38.5" rx="9" fill="#d50b3b"/>
<g fill="none" stroke="#fdeeed" stroke-width="2"><circle cx="71.5" cy="722.3" r="12.5"/><ellipse cx="71.5" cy="722.3" rx="5.5" ry="12.5"/><path d="M59 722.3 H84 M61 715.5 H82 M61 729 H82 M71.5 710 V735"/></g>
<text x="93" y="730" font-size="21" textLength="207" stroke="#fdeeed" stroke-width="2.2" stroke-linejoin="round" fill="#fdeeed" lengthAdjust="spacingAndGlyphs">WWW.CAPCUT.COM</text>
<path d="M328 708.5 a10.5 10.5 0 0 1 10.5 10.5 c0 7 -6.5 11 -10.5 17.5 c-4 -6.5 -10.5 -10.5 -10.5 -17.5 a10.5 10.5 0 0 1 10.5 -10.5Z M328 714.5 a4.3 4.3 0 1 0 0.01 0Z" fill="#f2dede" fill-rule="evenodd"/>
<text x="346" y="730" font-size="21" textLength="232" stroke="#fdeeed" stroke-width="2.2" stroke-linejoin="round" fill="#fdeeed" lengthAdjust="spacingAndGlyphs">123 ANYWHERE ST, 45</text>
<rect x="595.2" y="704.2" width="137.1" height="36.1" rx="12" fill="#fdeeed" stroke="#d50b3b" stroke-width="3.4"/>
<text x="662" y="731" font-size="23.5" font-style="italic" text-anchor="middle" textLength="103" stroke="#d50b3b" stroke-width="2.2" stroke-linejoin="round" fill="#d50b3b" lengthAdjust="spacingAndGlyphs">JOIN US!</text>
</g></symbol>
</defs></svg>
<svg width="0" height="0" style="position:absolute"><defs>
<radialGradient id="gfloor" cx=".5" cy=".5" r=".5"><stop offset="0" stop-color="#3a332d"/><stop offset=".7" stop-color="#26221f"/><stop offset="1" stop-color="#18181d"/></radialGradient>
<radialGradient id="gbun" cx=".45" cy=".3" r=".7"><stop offset="0" stop-color="#d8923a"/><stop offset=".6" stop-color="#b5661f"/><stop offset="1" stop-color="#8a4513"/></radialGradient>
<radialGradient id="gdim" cx=".5" cy=".5" r=".65"><stop offset="0" stop-color="#cf4010"/><stop offset=".6" stop-color="#ad2a10"/><stop offset="1" stop-color="#841812"/></radialGradient>
<linearGradient id="gsky" x1="0" y1="0" x2="1" y2="1"><stop offset="0" stop-color="#d4e4f2"/><stop offset=".4" stop-color="#86b0dc"/><stop offset="1" stop-color="#5a8cc4"/></linearGradient>
<symbol id="burger" viewBox="0 0 150 150"><g font-family="Liberation Serif,serif">
<rect width="150" height="150" fill="#18181d"/>
<ellipse cx="75" cy="126" rx="88" ry="21" fill="url(#gfloor)"/>
<rect y="128" width="150" height="22" fill="#18181d" opacity=".75"/>
<path d="M9 6 l5 2.5 l-5 2.5 l1.5 -2.5Z M132 5.5 l6 1 l-1 5Z" fill="#d9721c"/>
<text x="75" y="17.6" font-size="6.6" font-weight="700" fill="#d9721c" text-anchor="middle" textLength="47" lengthAdjust="spacingAndGlyphs">Classic Delicious</text>
<text x="74.5" y="36.6" font-size="19" font-weight="700" fill="#d6c48a" text-anchor="middle" textLength="84" lengthAdjust="spacingAndGlyphs">BURGER</text>
<path d="M28 30 q-3 3.5 0 7 M121 30 q3 3.5 0 7" stroke="#d9721c" stroke-width=".8" fill="none"/>
<path d="M24 40 q-6 6 2 9 q4 -3 0 -5 M126 40 q6 6 -2 9 q-4 -3 0 -5" stroke="#8a3a3a" stroke-width=".7" fill="none"/>
<g transform="translate(0 5) scale(1 .9)"><path d="M42 112 q-2 12 10 13 h46 q12 -1 10 -13Z" fill="#c07a2c"/>
<path d="M31 106 q6 -8 14 -3 q8 -6 16 -1 q10 -5 18 0 q10 -5 18 0 q10 -4 16 4 q-4 6 -10 3 q-8 5 -16 1 q-10 5 -18 0 q-10 5 -18 0 q-10 4 -20 -4Z" fill="#a4c455"/>
<rect x="42" y="100" width="68" height="7" rx="3" fill="#d8a47c"/>
<rect x="44" y="97" width="66" height="6" rx="3" fill="#d3382a"/>
<rect x="60" y="94.5" width="24" height="5.5" rx="2.7" fill="#6f8a2a"/>
<path d="M82 90 h30 q3 4 0 7 h-30Z" fill="#dde2ea"/>
<rect x="38" y="83" width="75" height="12" rx="6" fill="#4a2a1a"/>
<path d="M34 80 q20 -8 44 -4 q20 -4 34 3 q2 6 -4 7 q-16 -2 -30 2 q-6 8 -12 0 q-16 -3 -28 1 q-6 -3 -4 -9Z" fill="#d9a680"/>
<path d="M76 76 l10 -2 l4 5 l-8 3Z" fill="#f0b020"/>
<path d="M37 79 C35 58 52 47 75 47 C98 47 114 58 112 79 C90 72 58 73 37 79Z" fill="url(#gbun)"/>
</g>
<g fill="#3a2a2a"><rect x="9" y="100" width="8" height="9" opacity=".5"/><rect x="132" y="100" width="8" height="9" opacity=".5"/></g>
<text x="17.5" y="140" font-size="3.4" font-weight="700" fill="#fff" textLength="26" font-family="Liberation Sans,sans-serif">www.capcut.com</text>
<rect x="65" y="135" width="19.5" height="6.6" rx="3.3" fill="#e5a552"/><text x="74.8" y="139.7" font-size="3" font-weight="700" fill="#fff" text-anchor="middle" font-family="Liberation Sans,sans-serif">Order Now</text>
<text x="105" y="140" font-size="3.4" font-weight="700" fill="#fff" textLength="24" font-family="Liberation Sans,sans-serif">+123-456-789</text>
</g></symbol>
<symbol id="coffee" viewBox="0 0 125 125"><g font-family="Liberation Sans,sans-serif">
<rect width="125" height="125" fill="#f0f0f0"/>
<rect x="7" y="52.5" width="118" height="30" fill="#33221c"/>
<path d="M7 60 q14 -6 30 2 q6 10 -2 20 h-28Z" fill="#5e3c2c"/>
<rect x="7" y="80" width="118" height="32" fill="#b4c0ce"/>
<path d="M7 80 q16 -2 30 0 q-4 8 -12 8 q-10 0 -18 -4Z" fill="#3a2a24"/>
<rect x="7" y="110" width="118" height="15" fill="#b98a5c"/>
<rect x="19.5" y="92" width="5.6" height="25" rx="1.2" fill="#8e8e92"/><rect x="20.5" y="89" width="3.6" height="4" fill="#5a5a60"/><path d="M24 90 l9 4" stroke="#222" stroke-width="1"/>
<rect x="38" y="86" width="4" height="39" fill="#1c1c22"/>
<rect width="7" height="125" fill="#b6454b"/>
<circle cx="20.8" cy="0" r="5.4" fill="#f0917a"/><circle cx="37.5" cy="32.5" r="3.6" fill="#f0917a"/><circle cx="7.5" cy="112.8" r="3.4" fill="#f3a08c"/>
<text x="10.4" y="10.6" font-size="2.4" fill="#555">www.capcut.com</text>
<text x="10.3" y="18.4" font-size="6.4" font-weight="700" fill="#141414" textLength="36" lengthAdjust="spacingAndGlyphs">TAKE 35%</text>
<text x="10.3" y="24.8" font-size="6.4" font-weight="700" fill="#141414" textLength="36" lengthAdjust="spacingAndGlyphs">AT CC HO</text>
<rect x="10.8" y="34.2" width="25" height="5.8" fill="#b9b9bb"/><text x="23.3" y="38.5" font-size="3" font-weight="700" fill="#333" text-anchor="middle">SHOP NOW</text>
</g></symbol>
<symbol id="bday" viewBox="0 0 150 150"><g font-family="Liberation Serif,serif">
<rect width="150" height="150" fill="#e7ede2"/>
<text x="74.5" y="32" font-size="13" font-style="italic" fill="#b8902e" text-anchor="middle" textLength="91" lengthAdjust="spacingAndGlyphs">HAPPY BIRTHDAY</text>
<rect x="44.7" y="42" width="17.3" height="21.3" fill="#8f9c54"/><path d="M47 63.3 q1 -14 7 -14 q7 0 7 14Z" fill="#c98c6c"/><circle cx="52" cy="50" r="3.4" fill="#e8c4a8"/>
<rect x="66.3" y="39" width="17.4" height="24.3" fill="#5f8c3a"/><path d="M70 63.3 l2 -9 h6 l2 9Z" fill="#cfe0ee"/><circle cx="75" cy="50.5" r="3" fill="#e8c8b0"/>
<rect x="87.8" y="42" width="17.5" height="21.3" fill="#d6d2b8"/><path d="M92 63.3 l2 -8 h8 l2 8Z" fill="#9cbcdc"/><circle cx="97" cy="51" r="3.2" fill="#ecd0b4"/>
<rect x="38" y="66.3" width="22.8" height="28.4" fill="#7a4c1c"/><path d="M42 94.7 l2 -13 h9 l3 13Z" fill="#d8901c"/><circle cx="48.6" cy="77" r="3.6" fill="#e8b890"/><rect x="54" y="72" width="5" height="12" fill="#c8a020"/>
<rect x="63.8" y="66.3" width="22.9" height="28.4" fill="#98985a"/><path d="M67 94.7 l2 -12 h11 l3 12Z" fill="#b9b9b4"/><circle cx="74.5" cy="77.5" r="3.8" fill="#e8c4a4"/><path d="M70.4 75.4 h8.6 l-1 -3.4 h-6.4Z" fill="#33302c"/>
<rect x="89.2" y="66.3" width="22.8" height="28.4" fill="#b6ae70"/><rect x="89.2" y="66.3" width="22.8" height="8" fill="#e8dcc0"/><path d="M93 94.7 l2 -11 h11 l3 11Z" fill="#a8a8a0"/><circle cx="100.5" cy="79" r="3.8" fill="#d8a884"/><path d="M96.4 77.4 h8.4 l-1 -3.4 h-6.4Z" fill="#4a3a30"/>
<rect x="27.8" y="98.7" width="29.2" height="20" fill="#d8c8b0"/><rect x="27.8" y="98.7" width="8" height="20" fill="#f4f0ea"/><path d="M35.8 98.7 h5 q4 10 2 20 h-7Z" fill="#dc4870"/><circle cx="46" cy="105" r="4" fill="#ecc8a0"/>
<rect x="60" y="98.7" width="29.7" height="20" fill="#8c6c6c"/><rect x="62" y="100" width="8" height="6" fill="#5a6aa8"/><circle cx="76" cy="106" r="3" fill="#ecc8a8"/><rect x="80" y="100" width="7" height="10" fill="#d8a850"/><rect x="60" y="114" width="29.7" height="4.7" fill="#b89878"/>
<rect x="93" y="98.7" width="29.5" height="20" fill="#9a9a9c"/><rect x="107" y="100" width="8" height="18.7" fill="#e4e4e6"/><rect x="116" y="98.7" width="6.5" height="14" fill="#c8ccd0"/><path d="M99 112 h6 l-1 -7 h-4Z" fill="#e89aa8"/>
<g fill="#c8a02c"><path id="hrt" d="M42 128 l-3.4 -3.4 a2 2 0 0 1 3.4 -2.2 a2 2 0 0 1 3.4 2.2Z"/><use href="#hrt" x="32.8"/><use href="#hrt" x="65.5"/>
<g transform="translate(53 30) scale(.45)"><use href="#hrt"/></g><g transform="translate(75 30) scale(.45)"><use href="#hrt" x="0"/></g></g>
</g></symbol>
<symbol id="nonprofit" viewBox="0 0 150 150"><g font-family="Liberation Sans,sans-serif">
<rect width="150" height="150" fill="#fff"/>
<clipPath id="npc"><path d="M0 0 H150 V119.5 H28 A28 28 0 0 1 0 91.5Z"/></clipPath>
<g clip-path="url(#npc)">
<rect width="150" height="120" fill="#2b2521"/>
<path d="M0 0 h44 l10 36 l-30 8 l-24 -20Z" fill="#d93a5c"/>
<path d="M0 22 l26 0 l22 22 l-30 18 l-18 -6Z" fill="#4b3b31"/>
<path d="M56 0 h24 l-2 8 h-20Z" fill="#e8701c"/>
<path d="M100 0 h40 l-8 28 l-36 12 l-6 -10Z" fill="#1d5a4a"/>
<path d="M150 14 l-36 18 l8 36 l28 -6Z" fill="#5a6c9e"/>
<path d="M0 56 l30 -6 l34 24 l-40 30 l-24 -4Z" fill="#dcc4ac"/>
<path d="M48 36 q16 -10 34 0 q12 8 10 22 l-26 14 l-30 -22Z" fill="#ecc0a6"/>
<path d="M84 42 q18 -8 30 6 l-6 22 l-30 6Z" fill="#e4b094"/>
<path d="M30 60 q24 -10 56 4 q-2 12 -22 16 l-34 -6Z" fill="#f0c8ae"/>
<path d="M18 76 q26 -12 46 2 l4 30 l-40 12 l-22 -18Z" fill="#e6b89c"/>
<path d="M58 76 q10 -12 24 -8 l-4 28 l-14 6Z" fill="#46a6d8"/>
<path d="M70 74 q30 -20 60 -2 l20 14 v34 h-84 q-6 -26 4 -46Z" fill="#e9e5e1"/>
<path d="M120 70 l30 -6 v24Z" fill="#cdb49c"/>
</g>
<g fill="none" stroke="#fff" stroke-width="1"><path d="M8.6 8.6 h5.4 l-5.4 4.4 h5.4 M8.6 13 l6.6 -4.6 M8.6 8.6 l6.6 4.6"/></g>
<text x="18.5" y="13" font-size="6" font-weight="700" fill="#fff" textLength="24" lengthAdjust="spacingAndGlyphs">CapCut</text>
<text x="99.5" y="13" font-size="5" font-weight="700" fill="#fff" textLength="43" lengthAdjust="spacingAndGlyphs">+123-456-7890</text>
<text x="8.3" y="123.2" font-size="13.4" font-weight="700" fill="#fff" stroke="#c0282c" stroke-width=".7" textLength="100" lengthAdjust="spacingAndGlyphs">NON-PROFIT</text>
<text x="8.3" y="136.3" font-size="13.4" font-weight="700" fill="#b8181c" stroke="#b8181c" stroke-width=".9" textLength="130" lengthAdjust="spacingAndGlyphs">ORGANIZATION</text>
<g font-size="2.9" font-weight="700" fill="#222"><text x="8.5" y="143.8">hello@capcut.com</text><text x="54.5" y="143.8">123 Anywhere St., Any City</text><text x="111" y="143.8">www.capcut.com</text></g>
</g></symbol>
<symbol id="company" viewBox="0 0 150 150"><g font-family="Liberation Sans,sans-serif">
<rect width="150" height="150" fill="#e9e9e9"/>
<path d="M3 5.4 H130" stroke="#888" stroke-width=".5"/><text x="132" y="7.2" font-size="3.6" fill="#555" textLength="13" lengthAdjust="spacingAndGlyphs">CAPCUT</text>
<clipPath id="cpc"><rect x="3.3" y="11.2" width="86.7" height="86.6" rx="1.6"/></clipPath>
<g clip-path="url(#cpc)"><rect x="3.3" y="11.2" width="86.7" height="86.6" fill="url(#gsky)"/>
<path d="M13 46 L41 13.5 L77 32 L90 27 V98 H3.3 V82 L13 76Z" fill="#4e7ca8"/>
<path d="M41 13.5 L77 32 L48 52 L14 45Z" fill="#2f5c8c"/><path d="M34 36 l10 -8 l0 30 l-10 5Z" fill="#7ea4c8" opacity=".5"/>
<path d="M48 52 L90 27 V74 L3.3 88 V82 L13 76 V46Z" fill="#6d97be" opacity=".6"/>
<path d="M3.3 98 L90 72 V80 L12 98Z" fill="#8c4a1c"/><path d="M12 98 L90 80 V98Z" fill="#d9d4cb"/></g>
<rect x="92" y="11.7" width="53.8" height="49.1" fill="#d9d9d9"/>
<text x="97.5" y="25" font-size="9.6" font-weight="700" fill="#2b2b2b" textLength="28" lengthAdjust="spacingAndGlyphs">CAPCUT</text>
<text x="97.5" y="34.2" font-size="9.6" font-weight="700" fill="#2b2b2b" textLength="34" lengthAdjust="spacingAndGlyphs">COMPANY</text>
<g font-size="2.9" fill="#444"><text x="102.5" y="42">+123-456-7890</text><text x="102.5" y="47">www.capcut.com</text><text x="102.5" y="52.3">hello@capcut.com</text><text x="102.5" y="57.6">123 Anywhere St., Any City</text></g>
<g fill="#333"><circle cx="99" cy="41" r="1"/><circle cx="99" cy="46" r="1"/><circle cx="99" cy="51.3" r="1"/><circle cx="99" cy="56.6" r="1"/></g>
<rect x="92" y="62" width="26" height="35.8" rx="1.4" fill="#6e5c48"/><rect x="92" y="62" width="26" height="12" fill="#b8a890" opacity=".7"/><rect x="92" y="86" width="26" height="11.8" fill="#4a3c30" opacity=".7"/>
<rect x="119.7" y="62" width="26.1" height="35.8" rx="1.4" fill="#3a3a3c"/><rect x="121" y="68" width="10" height="10" fill="#8a8c90" opacity=".6"/><rect x="119.7" y="88" width="26.1" height="9.8" fill="#5a5a5c"/>
<text x="3.7" y="109" font-size="5.6" font-weight="700" fill="#222" textLength="48.3" lengthAdjust="spacingAndGlyphs">COMPANY PROFILE</text>
<g font-size="3" fill="#555" lengthAdjust="spacingAndGlyphs"><text x="3.7" y="114.6" textLength="132">ESTABLISHED IN 1988 AND HEADQUARTERED IN SHANGHAI, IT IS A ENTERPRISE GROUP THAT</text><text x="3.7" y="119.6" textLength="142">FOCUSES ON REAL ESTATE DEVELOPMENT, INTEGRATING REAL ESTATE INVESTMENT, DEVELOPMENT,</text><text x="3.7" y="124.6" textLength="136">CONSTRUCTION, PROPERTY MANAGEMENT, AND DIVERSIFIED OPERATIONS SUCH AS WHOLESALE</text><text x="3.7" y="129.4" textLength="64">MANAGEMENT AND COMMERCIAL OPERATIONS.</text></g>
<g fill="#f2f2f2" stroke="#666" stroke-width=".5"><rect x="3.3" y="135.3" width="43.4" height="8.4" rx="4.2"/><rect x="52.8" y="135.3" width="43" height="8.4" rx="4.2"/><rect x="102" y="135.3" width="43" height="8.4" rx="4.2"/></g>
<g font-size="2.9" font-weight="700" fill="#222" text-anchor="middle"><text x="25" y="140.6">CORPORATE CULTURE</text><text x="74.3" y="140.6">GROWTH FOOTPRINT</text><text x="123.5" y="140.6">HONOR</text></g>
</g></symbol>
<symbol id="dimsum" viewBox="0 0 150 150"><g font-family="Liberation Sans,sans-serif">
<rect width="150" height="150" fill="url(#gdim)"/>
<rect x="3.8" y="4" width="142.4" height="141.6" fill="none" stroke="#f5b400" stroke-width=".7"/>
<rect x="8.3" y="10.8" width="5.9" height="5.9" fill="#f5ecd6"/><rect x="135.8" y="10.8" width="5.9" height="5.9" fill="#f5ecd6"/>
<rect x="41" y="10.8" width="67.8" height="5.9" fill="#f5ecd6"/><text x="75" y="15.6" font-size="4.2" fill="#b8281c" text-anchor="middle" textLength="60" lengthAdjust="spacingAndGlyphs">CHINESE TRADITIONAL FOOD</text>
<text x="75" y="36.6" font-size="21.4" font-weight="700" fill="#fdb913" stroke="#fdb913" stroke-width=".5" text-anchor="middle" textLength="119" lengthAdjust="spacingAndGlyphs">DIMSUM FOOD</text>
<g fill="none" stroke="#f5b400" stroke-width=".9"><path id="lat" d="M5 66 h20 M5 72 h23 M5 78 h20 M10 60 v24 M16 59 v26 M22 60 v24 M7 62 h6 v6 h-6Z M19 62 h6 v6 h-6Z M7 76 h6 v6 h-6Z M19 76 h6 v6 h-6Z"/><use href="#lat" transform="translate(150 0) scale(-1 1)"/>
<path id="lat2" d="M7 104 h34 M7 110 h36 M7 116 h34 M12 99 v24 M19 98 v26 M26 98 v26 M33 99 v24 M8 101 h7 v6 h-7Z M30 101 h7 v6 h-7Z M8 114 h7 v6 h-7Z M30 114 h7 v6 h-7Z"/><use href="#lat2" transform="translate(150 0) scale(-1 1)"/></g>
<rect x="28" y="59.5" width="15.3" height="24.3" fill="#f5ecd6"/><rect x="107" y="59.5" width="15" height="24.3" fill="#f5ecd6"/>
<circle cx="75" cy="72.2" r="32.6" fill="#d8dce2"/>
<path d="M84 41 l12 5 l-32 56 l-12 -5Z" fill="#a06222"/><path d="M86 44 l6 2.5 l-14 24 l-6 -2.5Z" fill="#7a9a3a" opacity=".6"/>
<circle cx="66" cy="82" r="7" fill="#e6d9a8"/><circle cx="66" cy="82" r="3" fill="#4a3a20"/><circle cx="78" cy="77" r="6.6" fill="#e6d9a8"/><circle cx="78" cy="77" r="2.8" fill="#4a3a20"/>
<circle cx="79" cy="62.5" r="2.4" fill="#d8282c"/><circle cx="64" cy="59" r="4" fill="#4a2a1c"/>
<rect x="12" y="106.3" width="27" height="7.4" fill="#fdb913"/><text x="25.5" y="111.8" font-size="4.4" fill="#fbe9b0" text-anchor="middle" font-weight="700">DINE IN</text>
<rect x="48.3" y="107" width="53" height="7" fill="none" stroke="#f5b400" stroke-width=".7"/><text x="75" y="112.2" font-size="4.6" fill="#fdb913" text-anchor="middle" font-weight="700">ONLY $8</text>
<rect x="110.8" y="106.3" width="27.2" height="7.4" fill="#fdb913"/><text x="124.4" y="111.8" font-size="4.2" fill="#fbe9b0" text-anchor="middle" font-weight="700">TAKE AWAY</text>
<rect x="9.7" y="127.5" width="73.6" height="12" fill="#f5ecd6"/><text x="46.5" y="137.2" font-size="9.6" font-weight="700" fill="#8a1414" text-anchor="middle" textLength="39" lengthAdjust="spacingAndGlyphs">SHOP NOW</text>
<rect x="83.3" y="127.5" width="57" height="12" fill="#b42018" stroke="#e8b8a8" stroke-width=".6"/>
<g font-size="2.5" fill="#f5dcd0" text-anchor="middle"><text x="111.8" y="131.6">+123-456-7890</text><text x="111.8" y="134.6">WWW.CAPCUT.COM</text><text x="111.8" y="137.6">123 ANYWHERE ST., ANY CITY</text></g>
</g></symbol>
<symbol id="chicken" viewBox="0 0 150 150"><g font-family="Liberation Sans,sans-serif">
<rect width="150" height="150" fill="#bf2a2e"/>
<text x="75.5" y="35.8" font-size="34.5" font-weight="700" fill="#fff" stroke="#fff" stroke-width="1.2" text-anchor="middle" textLength="107" lengthAdjust="spacingAndGlyphs">FRIED</text>
<text x="75" y="57.5" font-size="23.6" font-weight="700" fill="#fff" stroke="#fff" stroke-width="1" text-anchor="middle" textLength="109" lengthAdjust="spacingAndGlyphs">CHICKEN</text>
<path d="M15 80 h78 l-7 60 h-62Z" fill="#dcdcdc"/><path d="M15 80 h78 l-1.4 8 q-38 10 -75 0Z" fill="#efefef"/><path d="M60 88 l26 -3 l-6 55 h-16Z" fill="#c4c4c6" opacity=".7"/>
<g transform="translate(0 3)"><g fill="#e4801e"><ellipse cx="54" cy="76" rx="38" ry="13"/><circle cx="30" cy="72" r="9"/><circle cx="44" cy="64" r="10"/><circle cx="60" cy="62" r="9"/><circle cx="74" cy="66" r="9"/><circle cx="86" cy="73" r="8"/><circle cx="52" cy="72" r="9"/><circle cx="68" cy="78" r="9"/></g>
<g fill="#f4a43c"><circle cx="42" cy="66" r="5"/><circle cx="58" cy="70" r="5"/><circle cx="72" cy="64" r="4"/><circle cx="32" cy="76" r="4"/><circle cx="80" cy="78" r="4"/><circle cx="50" cy="84" r="4.4"/></g>
<g fill="#b85a14"><circle cx="50" cy="60" r="2"/><circle cx="66" cy="72" r="2.2"/><circle cx="38" cy="80" r="2"/><circle cx="78" cy="70" r="1.8"/></g></g>
<path d="M32 97 m16 0 a16 16 0 1 1 -32 0 a16 16 0 1 1 32 0" fill="#fff" stroke="#fff" stroke-width="2.4" stroke-dasharray="3 2.2" transform="translate(0 17)"/>
<text x="32" y="110.4" font-size="4.8" font-weight="700" fill="#bf2a2e" text-anchor="middle">PRICE</text><text x="32" y="121" font-size="11" font-weight="700" fill="#bf2a2e" text-anchor="middle">$5</text>
<g font-size="3.9" font-weight="700" fill="#fff" text-anchor="end"><text x="133" y="74.6">crispy fried</text><text x="133" y="78.6">chicken</text><text x="133" y="82.6">glazed in a</text><text x="133" y="86.6">sticky and</text><text x="133" y="90.6">sweet spicy</text><text x="133" y="94.6">sauce</text></g>
<rect x="93.7" y="103.3" width="41" height="11.7" rx="4" fill="#fff"/><text x="114.2" y="111.4" font-size="5.6" font-weight="700" fill="#bf2a2e" text-anchor="middle" textLength="35" lengthAdjust="spacingAndGlyphs">ORDER NOW</text>
</g></symbol>
<symbol id="mideast" viewBox="0 0 150 150"><g font-family="Liberation Sans,sans-serif">
<rect width="150" height="150" fill="#f1eee8"/>
<rect x="3.9" y="4.2" width="142.2" height="141.6" fill="none" stroke="#c0272d" stroke-width=".6"/>
<rect x="48.8" y="4.2" width="52" height="6.6" fill="#f5a800"/><text x="75" y="9" font-size="3" font-weight="700" fill="#5a2a10" text-anchor="middle">RESTAURANT</text>
<text x="75" y="27.5" font-size="17.6" font-weight="700" fill="#c0272d" stroke="#c0272d" stroke-width=".4" text-anchor="middle" textLength="129" lengthAdjust="spacingAndGlyphs">MIDDLE EAST FOOD</text>
<rect x="4.2" y="52.5" width="141.6" height="45" fill="#c0272d"/>
<g fill="none" stroke="#c0272d" stroke-width=".7"><path d="M10.5 34.5 h14 M10.5 34.5 v14 M10.5 45 h3 M22 34.5 v3"/><path d="M139.5 34.5 h-14 M139.5 34.5 v14 M139.5 45 h-3 M128 34.5 v3"/><path d="M10.5 115.5 h14 M10.5 115.5 v-14 M10.5 105 h3 M22 115.5 v-3"/><path d="M139.5 115.5 h-14 M139.5 115.5 v-14 M139.5 105 h-3 M128 115.5 v-3"/></g>
<g fill="#f59a00"><circle cx="17" cy="40.8" r="3"/><circle cx="132.5" cy="40.8" r="3"/><circle cx="17" cy="108.3" r="3"/><circle cx="132.5" cy="108.3" r="3"/></g>
<g fill="none" stroke="#d8585c" stroke-width=".6"><path d="M11 60 q4 -4 5 1 q1 5 7 6 M13 78 l5 -1 l-3 9Z M126 60 q6 -2 4 4 q4 2 2 6 M128 86 q-2 -6 6 -6 q6 2 2 8Z"/></g>
<circle cx="75" cy="74.2" r="43.4" fill="#c9c9c9"/><circle cx="75" cy="74.2" r="41" fill="#e4e4e4"/><circle cx="75" cy="74.2" r="38.6" fill="#86622a"/>
<g stroke="#c8843a" stroke-width="3.4" stroke-linecap="round"><path d="M75 74 L75 40 M75 74 L99 50 M75 74 L109 74 M75 74 L99 98 M75 74 L75 108 M75 74 L51 98 M75 74 L41 74 M75 74 L51 50"/></g>
<g stroke="#a8622a" stroke-width="2.4" stroke-linecap="round"><path d="M75 74 L88 43 M75 74 L106 61 M75 74 L106 87 M75 74 L88 105 M75 74 L62 105 M75 74 L44 87 M75 74 L44 61 M75 74 L62 43"/></g>
<g fill="#d8a452"><path d="M58 44 l8 -4 l-1 9Z M92 44 l-8 -4 l1 9Z M44 96 l9 1 l-6 7Z M106 96 l-9 1 l6 7Z M40 66 l7 5 l-8 3Z M110 66 l-7 5 l8 3Z"/></g>
<g fill="#7c8c34"><circle cx="47" cy="54" r="3"/><circle cx="103" cy="54" r="3"/><circle cx="56" cy="104" r="3"/><circle cx="96" cy="104" r="3"/></g>
<g fill="#e06a20"><circle cx="42" cy="62" r="2"/><circle cx="100" cy="46" r="2.2"/><circle cx="108" cy="92" r="2"/></g>
<rect x="48.8" y="101.3" width="52" height="4.4" fill="#fff"/><text x="75" y="104.8" font-size="3" font-weight="700" fill="#222" text-anchor="middle">BEST SELLER FOOD</text>
<rect x="9.7" y="123.4" width="65.3" height="12" fill="#c0272d"/><rect x="75" y="123.4" width="65.3" height="12" fill="none" stroke="#c0272d" stroke-width=".6"/>
<text x="42.3" y="133.4" font-size="9" font-weight="700" fill="#f1eee8" text-anchor="middle" textLength="44" lengthAdjust="spacingAndGlyphs">SHOP NOW</text><text x="107.6" y="128.6" font-size="2.6" fill="#333" text-anchor="middle">+123-456-7890</text>
</g></symbol>
</defs></svg>
<div id="titlebar" class="abs">
<svg class="abs" style="left:0;top:0" width="1919" height="44" viewBox="0 0 1919 44">
<g fill="none" stroke="#4a4a4a" stroke-width="1.6" stroke-linecap="round" stroke-linejoin="round">
<path d="M28 15 L21.5 21.5 L28 28"/><path d="M67 15 L73.5 21.5 L67 28"/></g>
<g fill="none" stroke="#bdbdbd" stroke-width="1.6" stroke-linecap="round" stroke-linejoin="round">
<path d="M1743.5 19 A6.8 6.8 0 1 0 1744.2 24.5"/><path d="M1744 14.5 V19.3 H1739.2"/>
<path d="M1783 21.5 H1795"/>
<rect x="1827.5" y="18" width="9" height="9" rx="1.5"/><path d="M1830 18 V16.5 a1.2 1.2 0 0 1 1.2 -1.2 H1838 a1.2 1.2 0 0 1 1.2 1.2 V23.5 a1.2 1.2 0 0 1 -1.2 1.2 H1836.6"/>
<path d="M1873 15.5 L1885 27.5 M1885 15.5 L1873 27.5"/></g>
<path d="M1763 15 V28" stroke="#555" stroke-width="1"/>
</svg>
</div>
<div id="nav" class="abs">
<svg class="abs" style="left:28px;top:20px" width="38" height="32" viewBox="31 65 38 32"><g fill="none" stroke="#ececec" stroke-width="4.4" stroke-linejoin="round"><path d="M64.5 70.6 L37.6 86 Q35.6 90.4 40 90.4 H53.6 Q57.6 90.4 57.6 86.4 V85"/><path d="M64.5 90.4 L37.6 75 Q35.6 70.6 40 70.6 H53.6 Q57.6 70.6 57.6 74.6 V76"/></g></svg>
<div class="abs" style="left:32px;top:69px;width:30px;height:1px;background:#3a3a3a"></div>
<div class="abs" style="left:10px;top:91px;width:73px;height:73px;border-radius:13px;background:linear-gradient(205deg,#1d4566 0%,#1c2f42 35%,#1e2228 70%,#1f2024 100%)"></div>
<div class="navi" style="top:131px;color:#fff;font-size:14.6px">Templates<svg style="left:33px" width="28" height="24" viewBox="0 0 28 24"><rect class="ic" x="3.2" y="2.6" width="12.4" height="18.6" rx="2.6" style="stroke-width:2.1"/><path class="ic" d="M20.2 5.2 V18.6 M24 7.8 V16" style="stroke-width:2.1"/></svg></div>
<div class="navi" style="top:208.5px">Design<svg width="24" height="24" viewBox="0 0 24 24"><path class="icg" d="M20.3 3.2 C15 3.6 9.6 8.4 8 13.6 L10.6 16.2 C15.8 14.8 20.2 9.4 20.3 3.2 Z M8 13.6 C5 13.2 3.3 15.6 3.8 20.3 C8.3 20.9 11 19.2 10.6 16.2 M3.6 8.6 C3.6 5.6 5.4 3.6 8.4 3.6 M20.6 14.6 C20.6 17.8 18.6 20 15.4 20.2"/></svg></div>
<div class="navi" style="top:286px">Upload<svg width="24" height="24" viewBox="0 0 24 24"><path class="icg" d="M8.2 19 H6.4 A4.3 4.3 0 0 1 5.4 10.5 A6.6 6.6 0 0 1 18.5 10 A4.5 4.5 0 0 1 18 19 H15.8 M12 20.5 V12.6 M8.8 15.4 L12 12.2 L15.2 15.4"/></svg></div>
<div class="navi" style="top:363.5px">Text<svg width="24" height="24" viewBox="0 0 24 24"><path class="icg" d="M4.2 6.4 V3.6 H19.8 V6.4 M12 3.6 V20.6 M9 20.6 H15" style="stroke-width:2"/></svg></div>
<div class="navi" style="top:441px">Shapes<svg width="24" height="24" viewBox="0 0 24 24"><path class="icg" d="M13.2 13 L19.6 21.2 H6.8 Z M7.2 14.6 A5.6 5.6 0 0 1 8.8 4.2 M11.8 9.5 V4.6 A1.6 1.6 0 0 1 13.4 3 H19.2 A1.6 1.6 0 0 1 20.8 4.6 V10.4 A1.6 1.6 0 0 1 19.2 12 H18.4"/></svg></div>
<div class="navi" style="top:518.5px">Stickers<svg width="24" height="24" viewBox="0 0 24 24"><path class="icg" d="M12.6 2.6 A9.4 9.4 0 1 0 21.6 11.6 Z M12.6 2.6 C12.2 8 16 11.8 21.6 11.6 M14.4 4.8 C14.8 7.6 16.6 9.4 19.6 9.8"/></svg></div>
<div class="navi" style="top:596px">Frames<svg width="24" height="24" viewBox="0 0 24 24"><rect class="icg" x="3" y="3" width="18" height="18" rx="2.6"/><rect class="icg" x="7.4" y="7.4" width="9.2" height="9.2" rx="2"/></svg></div>
<div class="navi" style="top:673.5px">Collage<svg width="24" height="24" viewBox="0 0 24 24"><rect class="icg" x="3.4" y="3.4" width="17.2" height="17.2" rx="2.6"/><path class="icg" d="M11.4 3.4 V20.6 M11.4 11.8 H20.6"/></svg></div>
<div class="navi" style="top:751px">Brand<br>kit<svg width="24" height="24" viewBox="0 0 24 24"><path class="icg" d="M4.4 11.4 L12.4 3.4 L19.6 8.8 M9.6 8.6 L14 5 M5.8 11 H18.2 A3 3 0 0 1 21.2 14 V17 A3 3 0 0 1 18.2 20 H5.8 A3 3 0 0 1 2.8 17 V14 A3 3 0 0 1 5.8 11 Z"/><circle cx="7.2" cy="15.4" r="1.2" fill="#a7b0b6"/></svg></div>
<svg class="abs" style="left:32px;top:920px" width="30" height="26" viewBox="0 0 30 26"><rect class="icg" x="4.2" y="4.4" width="21.6" height="17" rx="2.8" style="stroke-width:1.8"/><path class="icg" d="M9.2 9.4 V11 M13 9.4 V11 M17 9.4 V11 M20.8 9.4 V11 M10.4 16.4 H19.6" style="stroke-width:2"/></svg>
</div>
<div id="navb" class="abs"></div>
<div id="winl" class="abs"></div>
<div id="tpl" class="abs">
<div class="abs" style="left:20px;top:13px;width:255px;height:47px;border-radius:11px;background:#25262b"></div>
<svg class="abs" style="left:20px;top:13px" width="255" height="47" viewBox="118 58 255 47"><g class="icg" style="stroke-width:1.7;stroke:#8a8c95"><circle cx="141.2" cy="80.2" r="6.6"/><path d="M146.2 85.2 L149.6 88.6"/></g><path d="M327.5 73 V89" stroke="#3a3b42" stroke-width="1.2"/>
<g class="icg" style="stroke-width:1.7;stroke:#d6d7db"><path d="M339 77 V75 a2.4 2.4 0 0 1 2.4 -2.4 H343.4 M351.6 72.6 H353.6 a2.4 2.4 0 0 1 2.4 2.4 V77 M356 85.6 V87.6 a2.4 2.4 0 0 1 -2.4 2.4 H351.6 M343.4 90 H341.4 a2.4 2.4 0 0 1 -2.4 -2.4 V85.6"/></g><path d="M341.5 88 L345.6 81.8 L348 84.6 L349.6 83 L353.6 88 Z" fill="#d6d7db"/><circle cx="350.6" cy="78.2" r="1.9" fill="#d6d7db"/></svg>
<div class="abs" style="left:61.5px;top:24.5px;font-size:17.4px;line-height:24px;color:#7f818a;white-space:nowrap">Search for templat...</div>
<div class="abs" style="left:285px;top:14px;width:45px;height:45px;border-radius:11px;background:#25262b"><svg class="abs" style="left:11px;top:11px" width="24" height="24" viewBox="0 0 24 24"><g class="icg" style="stroke-width:1.7;stroke:#b4bcc2"><path d="M5.8 3.3 H21.4 L15.5 11.2 V19 L11.2 21 V11.2 Z"/><path d="M2 12.9 H7 M4 17 H8"/></g></svg></div>
<div class="chip" style="left:20px;width:116px;text-align:center">Father's Day</div>
<div class="chip" style="left:146px;width:122px;padding-left:37px;font-size:15.4px">Wallpaper<svg class="abs" style="left:18px;top:9px" width="17" height="17" viewBox="0 0 17 17"><path d="M8.5 1 C13 1 16 3.8 16 7.4 C16 10 14 11 12 10.6 C10.4 10.3 9.6 11.2 10.2 12.6 C10.8 14.4 9.8 16 7.8 16 C3.8 16 1 12.8 1 8.6 C1 4.4 4.2 1 8.5 1 Z" fill="#e59c9c"/><circle cx="5" cy="6" r="1.3" fill="#7a4bd8"/><circle cx="8.6" cy="4" r="1.3" fill="#e0457a"/><circle cx="4.2" cy="10" r="1.3" fill="#2cb46a"/><circle cx="6.8" cy="13" r="1.3" fill="#2d6be0"/><circle cx="12.4" cy="6.6" r="1.6" fill="#26272c"/></svg></div>
<div class="chip" style="left:278px;width:110px;padding-left:37px;color:#6d6e75">Ea<svg class="abs" style="left:19px;top:9px" width="18" height="18" viewBox="0 0 18 18"><circle cx="9" cy="6.4" r="5" fill="#e3c64a"/><path d="M2.4 9 L4.6 10.4 L6.8 8.6 L9 10.4 L11.2 8.6 L13.4 10.4 L15.6 9 C15.8 13.8 12.8 16.6 9 16.6 C5.2 16.6 2.2 13.8 2.4 9Z" fill="#bfc2c6"/></svg></div>
<div class="abs" style="left:300px;top:70px;width:49px;height:40px;background:linear-gradient(90deg,rgba(12,13,16,0) 0%,#0c0d10 62%)"></div>
<div class="abs" style="left:20px;top:135px;font-size:19.4px;font-weight:700;line-height:26px;color:#fff">Recents</div>
<div class="abs" style="left:230px;top:137px;width:100px;text-align:right;font-size:17.4px;line-height:24px;color:#93959d">View all</div>
<!-- recents -->
<div class="thumb" style="left:20px;top:177px;width:125px;height:125px"><svg width="125" height="125" viewBox="0 0 777 777"><use href="#poster"/></svg></div>
<div class="thumb" style="left:155px;top:177px;width:125px;height:125px"><svg width="125" height="125" viewBox="0 0 150 150"><use href="#burger"/></svg></div>
<div class="thumb" style="left:290px;top:177px;width:41px;height:125px;border-radius:8px 0 0 8px"><svg width="125" height="125" viewBox="0 0 125 125"><use href="#coffee"/></svg></div>
<div class="abs" style="left:308px;top:224px;width:30px;height:30px;border-radius:15px;background:#303136;box-shadow:0 0 0 1px rgba(255,255,255,.04)"><svg width="30" height="30" viewBox="0 0 30 30"><path class="icg" d="M12.6 9.6 L18 15 L12.6 20.4" style="stroke-width:1.8;stroke:#8f9097"/></svg></div>
<!-- current size -->
<svg class="abs" style="left:24px;top:328px" width="22" height="22" viewBox="0 0 22 22"><g class="icg" style="stroke-width:1.7;stroke:#e8e8ea"><path d="M2.6 7 V4.8 a2 2 0 0 1 2 -2 H7 M15 2.8 H17.4 a2 2 0 0 1 2 2 V7 M19.4 15 V17.2 a2 2 0 0 1 -2 2 H15 M7 19.2 H4.6 a2 2 0 0 1 -2 -2 V15"/></g><rect x="5.8" y="5.8" width="10.4" height="10.4" rx="1.6" fill="#c9cace"/></svg>
<div class="abs" style="left:52.5px;top:325px;font-size:19.4px;font-weight:700;line-height:26px;color:#fff;white-space:nowrap">Current size</div>
<svg class="abs" style="left:168px;top:330px" width="18" height="18" viewBox="0 0 18 18"><path class="icg" d="M4.4 6.6 L9 11.2 L13.6 6.6" style="stroke-width:1.7;stroke:#e8e8ea"/></svg>
<div class="thumb" style="left:20px;top:365px;width:150px;height:150px"><svg width="150" height="150" viewBox="0 0 150 150"><use href="#bday"/></svg></div>
<div class="thumb" style="left:180px;top:365px;width:150px;height:150px"><svg width="150" height="150" viewBox="0 0 150 150"><use href="#nonprofit"/></svg></div>
<div class="thumb" style="left:20px;top:525px;width:150px;height:150px"><svg width="150" height="150" viewBox="0 0 150 150"><use href="#burger"/></svg></div>
<div class="thumb" style="left:180px;top:525px;width:150px;height:150px"><svg width="150" height="150" viewBox="0 0 777 777"><use href="#poster"/></svg></div>
<div class="thumb" style="left:20px;top:685px;width:150px;height:150px"><svg width="150" height="150" viewBox="0 0 150 150"><use href="#company"/></svg></div>
<div class="thumb" style="left:180px;top:685px;width:150px;height:150px"><svg width="150" height="150" viewBox="0 0 150 150"><use href="#dimsum"/></svg></div>
<div class="thumb" style="left:20px;top:845px;width:150px;height:150px"><svg width="150" height="150" viewBox="0 0 150 150"><use href="#chicken"/></svg></div>
<div class="thumb" style="left:180px;top:845px;width:150px;height:150px"><svg width="150" height="150" viewBox="0 0 150 150"><use href="#mideast"/></svg></div>
</div>
<div id="tplb" class="abs"></div>
<svg class="abs" style="left:440px;top:490px;z-index:5" width="16" height="86" viewBox="440 490 16 86"><path d="M447 497 C447 505 452 507 452 514 V552 C452 559 447 561 447 569 Z" fill="#0c0d10"/><path d="M451.6 525 L446 532.4 L451.6 539.8" fill="none" stroke="#595a61" stroke-width="1.5" stroke-linecap="round" stroke-linejoin="round"/></svg>
<div id="toolbar" class="abs">
<div class="abs" style="left:28px;top:24px;font-size:17px;font-weight:700;line-height:24px;color:#f4f4f5;white-space:nowrap">Untitled image</div>
<div class="abs" style="left:560px;top:15px;width:40px;height:40px;border-radius:9px;background:#36373d"></div>
<svg class="abs" style="left:0;top:0" width="1471" height="71" viewBox="448 45 1471 71">
<g class="ic" style="stroke-width:1.9;stroke:#f2f2f2">
<path d="M613 76.5 L618.5 82 L624 76.5"/>
<path d="M1022.8 71.2 L1023.6 90.6 L1028.9 84.6 L1037.9 83.8 Z" stroke-width="2"/>
<path d="M1068.5 82 V71.8 a1.5 1.5 0 0 1 3 0 V70.2 a1.5 1.5 0 0 1 3 0 V71 a1.5 1.5 0 0 1 3 0 V72.6 a1.5 1.5 0 0 1 3 0 V84 C1080.5 89 1077.5 91.8 1073.6 91.8 C1069.6 91.8 1067.8 89.6 1065.6 85.6 L1063.6 82 C1063 80.6 1065 79.4 1066.2 81 L1068.5 84 Z M1071.5 72 V79.5 M1074.5 71 V79.5 M1077.5 72.6 V79.5" stroke-width="1.7"/>
<rect x="1111.5" y="71.5" width="17" height="17" rx="2.2"/><path d="M1111.5 77.5 H1128.5 M1121.5 77.5 V88.5"/>
<path d="M1140 77.8 L1145.2 83 L1150.4 77.8"/>
<path d="M1235 77.8 L1240.2 83 L1245.4 77.8"/>
<path d="M1289.5 73 L1285 77.5 L1289.5 82 M1285.4 77.5 H1295.4 A5.6 5.6 0 0 1 1295.4 88.7 H1289" stroke-width="2"/>
</g>
<path d="M1342.5 73 L1347 77.5 L1342.5 82 M1346.6 77.5 H1336.6 A5.6 5.6 0 0 0 1336.6 88.7 H1343" class="ic" style="stroke-width:2;stroke:#44464d"/>
<path d="M1267.5 70 V90" stroke="#34353b" stroke-width="1.2"/>
<g class="ic" style="stroke-width:1.9;stroke:#f2f2f2">
<path d="M1778.5 69.2 L1787.4 72.4 V80 C1787.4 85.6 1783.4 89.2 1778.5 91 C1773.6 89.2 1769.6 85.6 1769.6 80 V72.4 Z"/><path d="M1774.8 80 L1777.6 82.8 L1782.6 77.6"/>
<circle cx="1828.5" cy="80" r="9.8"/><path d="M1825.4 77.2 A3.2 3.2 0 1 1 1829.6 80.6 C1828.7 81.1 1828.5 81.6 1828.5 82.8" stroke-width="1.8"/><circle cx="1828.5" cy="86" r=".7" fill="#f2f2f2" stroke-width="1.2"/>
<path d="M1878.5 69.8 L1887.4 74.9 V85.1 L1878.5 90.2 L1869.6 85.1 V74.9 Z"/><circle cx="1878.5" cy="80" r="3.4"/>
</g>
</svg>
<div class="abs" style="left:730px;top:24px;font-size:18px;font-weight:700;line-height:24px;color:#f4f4f5">58%</div>
<div class="abs" style="left:1150px;top:15px;width:150px;height:40px;border-radius:11px;background:linear-gradient(90deg,#3a9ff0 0%,#1fb4e6 30%,#08c2e0 60%,#00c8dc 100%);box-shadow:0 0 8px rgba(0,190,225,.25)">
<svg class="abs" style="left:11.5px;top:10.5px" width="19" height="19" viewBox="0 0 20 20"><g class="ic" style="stroke-width:1.7"><path d="M6.4 8.2 H5.6 a1.8 1.8 0 0 0 -1.8 1.8 V14.2 a1.8 1.8 0 0 0 1.8 1.8 H14.4 a1.8 1.8 0 0 0 1.8 -1.8 V10 a1.8 1.8 0 0 0 -1.8 -1.8 H13.6"/><path d="M10 11.8 V3.6 M7.2 6 L10 3.2 L12.8 6"/></g></svg>
<div class="abs" style="left:36px;top:8px;font-size:16.6px;font-weight:700;line-height:24px;color:#fff;white-space:nowrap">Download all</div></div>
</div>
<div id="hruler" class="abs"><svg width="1349" height="27" viewBox="448 116 1349 27">
<rect x="1308" y="116" width="162" height="27" fill="#04191c"/>
<rect x="448" y="142" width="1349" height="1" fill="#2a2224"/><rect x="475" y="116" width="1" height="27" fill="#2a2224"/>
<path d="M733.5 143 v-8.5 M740.7 143 v-2.6 M747.9 143 v-2.6 M755.1 143 v-2.6 M762.3 143 v-2.6 M769.5 143 v-5.5 M776.7 143 v-2.6 M783.9 143 v-2.6 M791.1 143 v-2.6 M798.3 143 v-2.6 M805.5 143 v-8.5 M812.7 143 v-2.6 M819.9 143 v-2.6 M827.1 143 v-2.6 M834.3 143 v-2.6 M841.5 143 v-5.5 M848.7 143 v-2.6 M855.9 143 v-2.6 M863.1 143 v-2.6 M870.3 143 v-2.6 M877.5 143 v-8.5 M884.7 143 v-2.6 M891.9 143 v-2.6 M899.1 143 v-2.6 M906.3 143 v-2.6 M913.5 143 v-5.5 M920.7 143 v-2.6 M927.9 143 v-2.6 M935.1 143 v-2.6 M942.3 143 v-2.6 M949.5 143 v-8.5 M956.7 143 v-2.6 M963.9 143 v-2.6 M971.1 143 v-2.6 M978.3 143 v-2.6 M985.5 143 v-5.5 M992.7 143 v-2.6 M999.9 143 v-2.6 M1007.1 143 v-2.6 M1014.3 143 v-2.6 M1021.5 143 v-8.5 M1028.7 143 v-2.6 M1035.9 143 v-2.6 M1043.1 143 v-2.6 M1050.3 143 v-2.6 M1057.5 143 v-5.5 M1064.7 143 v-2.6 M1071.9 143 v-2.6 M1079.1 143 v-2.6 M1086.3 143 v-2.6 M1093.5 143 v-8.5 M1100.7 143 v-2.6 M1107.9 143 v-2.6 M1115.1 143 v-2.6 M1122.3 143 v-2.6 M1129.5 143 v-5.5 M1136.7 143 v-2.6 M1143.9 143 v-2.6 M1151.1 143 v-2.6 M1158.3 143 v-2.6 M1165.5 143 v-8.5 M1172.7 143 v-2.6 M1179.9 143 v-2.6 M1187.1 143 v-2.6 M1194.3 143 v-2.6 M1201.5 143 v-5.5 M1208.7 143 v-2.6 M1215.9 143 v-2.6 M1223.1 143 v-2.6 M1230.3 143 v-2.6 M1237.5 143 v-8.5 M1244.7 143 v-2.6 M1251.9 143 v-2.6 M1259.1 143 v-2.6 M1266.3 143 v-2.6 M1273.5 143 v-5.5 M1280.7 143 v-2.6 M1287.9 143 v-2.6 M1295.1 143 v-2.6 M1302.3 143 v-2.6 M1309.5 143 v-8.5 M1316.7 143 v-2.6 M1323.9 143 v-2.6 M1331.1 143 v-2.6 M1338.3 143 v-2.6 M1345.5 143 v-5.5 M1352.7 143 v-2.6 M1359.9 143 v-2.6 M1367.1 143 v-2.6 M1374.3 143 v-2.6 M1381.5 143 v-8.5 M1388.7 143 v-2.6 M1395.9 143 v-2.6 M1403.1 143 v-2.6 M1410.3 143 v-2.6 M1417.5 143 v-5.5 M1424.7 143 v-2.6 M1431.9 143 v-2.6 M1439.1 143 v-2.6 M1446.3 143 v-2.6 M1453.5 143 v-8.5 M1460.7 143 v-2.6 M1467.9 143 v-2.6 M1475.1 143 v-2.6 M1482.3 143 v-2.6 M1489.5 143 v-5.5 M1496.7 143 v-2.6 M1503.9 143 v-2.6 M1511.1 143 v-2.6 M1518.3 143 v-2.6 M1525.5 143 v-8.5 " stroke="#b9b9b9" stroke-width="1" fill="none"/>
<g font-family="Liberation Sans,sans-serif" font-size="12.2" font-weight="700" fill="#8b8b8b" text-anchor="middle">
<text x="733.5" y="131.3">0</text>
<text x="805.5" y="131.3">100</text>
<text x="877.5" y="131.3">200</text>
<text x="949.5" y="131.3">300</text>
<text x="1021.5" y="131.3">400</text>
<text x="1093.5" y="131.3">500</text>
<text x="1165.5" y="131.3">600</text>
<text x="1237.5" y="131.3">700</text>
<text x="1309.5" y="131.3">800</text>
<text x="1381.5" y="131.3">900</text>
<text x="1453.5" y="131.3">1000</text>
<text x="1525.5" y="131.3">1100</text>
</g></svg></div>
<div id="vruler" class="abs"><svg width="28" height="874" viewBox="448 143 28 874">
<rect x="448" y="418.5" width="28" height="79" fill="#04191c"/>
<rect x="475" y="143" width="1" height="874" fill="#2a2224"/>
<path d="M476 193.0 h-8.5 M476 200.2 h-2.6 M476 207.4 h-2.6 M476 214.6 h-2.6 M476 221.8 h-2.6 M476 229.0 h-5.5 M476 236.2 h-2.6 M476 243.4 h-2.6 M476 250.6 h-2.6 M476 257.8 h-2.6 M476 265.0 h-8.5 M476 272.2 h-2.6 M476 279.4 h-2.6 M476 286.6 h-2.6 M476 293.8 h-2.6 M476 301.0 h-5.5 M476 308.2 h-2.6 M476 315.4 h-2.6 M476 322.6 h-2.6 M476 329.8 h-2.6 M476 337.0 h-8.5 M476 344.2 h-2.6 M476 351.4 h-2.6 M476 358.6 h-2.6 M476 365.8 h-2.6 M476 373.0 h-5.5 M476 380.2 h-2.6 M476 387.4 h-2.6 M476 394.6 h-2.6 M476 401.8 h-2.6 M476 409.0 h-8.5 M476 416.2 h-2.6 M476 423.4 h-2.6 M476 430.6 h-2.6 M476 437.8 h-2.6 M476 445.0 h-5.5 M476 452.2 h-2.6 M476 459.4 h-2.6 M476 466.6 h-2.6 M476 473.8 h-2.6 M476 481.0 h-8.5 M476 488.2 h-2.6 M476 495.4 h-2.6 M476 502.6 h-2.6 M476 509.8 h-2.6 M476 517.0 h-5.5 M476 524.2 h-2.6 M476 531.4 h-2.6 M476 538.6 h-2.6 M476 545.8 h-2.6 M476 553.0 h-8.5 M476 560.2 h-2.6 M476 567.4 h-2.6 M476 574.6 h-2.6 M476 581.8 h-2.6 M476 589.0 h-5.5 M476 596.2 h-2.6 M476 603.4 h-2.6 M476 610.6 h-2.6 M476 617.8 h-2.6 M476 625.0 h-8.5 M476 632.2 h-2.6 M476 639.4 h-2.6 M476 646.6 h-2.6 M476 653.8 h-2.6 M476 661.0 h-5.5 M476 668.2 h-2.6 M476 675.4 h-2.6 M476 682.6 h-2.6 M476 689.8 h-2.6 M476 697.0 h-8.5 M476 704.2 h-2.6 M476 711.4 h-2.6 M476 718.6 h-2.6 M476 725.8 h-2.6 M476 733.0 h-5.5 M476 740.2 h-2.6 M476 747.4 h-2.6 M476 754.6 h-2.6 M476 761.8 h-2.6 M476 769.0 h-8.5 M476 776.2 h-2.6 M476 783.4 h-2.6 M476 790.6 h-2.6 M476 797.8 h-2.6 M476 805.0 h-5.5 M476 812.2 h-2.6 M476 819.4 h-2.6 M476 826.6 h-2.6 M476 833.8 h-2.6 M476 841.0 h-8.5 M476 848.2 h-2.6 M476 855.4 h-2.6 M476 862.6 h-2.6 M476 869.8 h-2.6 M476 877.0 h-5.5 M476 884.2 h-2.6 M476 891.4 h-2.6 M476 898.6 h-2.6 M476 905.8 h-2.6 M476 913.0 h-8.5 M476 920.2 h-2.6 M476 927.4 h-2.6 M476 934.6 h-2.6 M476 941.8 h-2.6 M476 949.0 h-5.5 M476 956.2 h-2.6 M476 963.4 h-2.6 M476 970.6 h-2.6 M476 977.8 h-2.6 M476 985.0 h-8.5 M476 992.2 h-2.6 M476 999.4 h-2.6 M476 1006.6 h-2.6 M476 1013.8 h-2.6 " stroke="#b9b9b9" stroke-width="1" fill="none"/>
<g font-family="Liberation Sans,sans-serif" font-size="12.2" font-weight="700" fill="#8b8b8b" text-anchor="middle">
<text transform="translate(464.5 193.0) rotate(-90)" x="0" y="0">0</text>
<text transform="translate(464.5 265.0) rotate(-90)" x="0" y="0">100</text>
<text transform="translate(464.5 337.0) rotate(-90)" x="0" y="0">200</text>
<text transform="translate(464.5 409.0) rotate(-90)" x="0" y="0">300</text>
<text transform="translate(464.5 481.0) rotate(-90)" x="0" y="0">400</text>
<text transform="translate(464.5 553.0) rotate(-90)" x="0" y="0">500</text>
<text transform="translate(464.5 625.0) rotate(-90)" x="0" y="0">600</text>
<text transform="translate(464.5 697.0) rotate(-90)" x="0" y="0">700</text>
<text transform="translate(464.5 769.0) rotate(-90)" x="0" y="0">800</text>
<text transform="translate(464.5 841.0) rotate(-90)" x="0" y="0">900</text>
<text transform="translate(464.5 913.0) rotate(-90)" x="0" y="0">1000</text>
<text transform="translate(464.5 985.0) rotate(-90)" x="0" y="0">1100</text>
</g></svg></div>
<div id="canvas" class="abs">
<div class="abs" style="left:257px;top:17px;font-size:13.2px;font-weight:700;color:#7d7f88;line-height:20px">Page 1</div>
<svg class="abs" style="left:257px;top:49.5px;--thumbtxt:none;--maintxt:inline" width="777.5" height="777" viewBox="0 0 777 777" preserveAspectRatio="none"><use href="#poster"/></svg>
<!-- selection -->
<svg class="abs" style="left:0;top:0" width="1321" height="874" viewBox="476 143 1321 874">
<rect x="1336" y="360.5" width="60" height="43" rx="10" fill="#fff7f6" style="filter:drop-shadow(0 1px 3px rgba(120,40,50,.35))"/>
<g fill="none" stroke="#1b1b1f" stroke-width="2" stroke-linejoin="round"><rect x="1357" y="378" width="12" height="12" rx="2"/><path d="M1360.5 374.5 H1372"/><path d="M1363 381.5 V386.5 M1360.5 384 H1365.5" stroke-width="1.8"/></g>
<path d="M1314 418 L1420 427.5 M1307 484 L1420 494 M1314 418 L1307 484" stroke="#22b4d6" stroke-width="2" fill="none"/>
<circle cx="1314" cy="418" r="7.2" fill="#fff" stroke="#8a8a90" stroke-width="1"/>
<circle cx="1307" cy="484" r="7.2" fill="#fff" stroke="#8a8a90" stroke-width="1"/>
<rect x="1306.6" y="440" width="8.4" height="21.4" rx="4.2" fill="#fff" stroke="#8a8a90" stroke-width="1" transform="rotate(5 1310.8 451)"/>
<!-- canvas scrollbars -->
<rect x="852" y="1011" width="540" height="8" rx="3" fill="#47464a"/>
<rect x="1789" y="333" width="7" height="362" rx="3" fill="#4a474b"/>
</svg>
</div>
<div class="abs" style="left:1371px;top:153px;width:336px;height:675px;border-radius:22px;overflow:hidden;background:#16171b;box-shadow:0 0 0 1px rgba(255,255,255,.05),0 6px 24px rgba(0,0,0,.35)">
<div class="abs" style="left:0;top:0;width:336px;height:675px;background:linear-gradient(90deg,#3b222a 0%,#3d2a30 8%,#443a3c 24%,#3f3a3c 32%,#2a2729 40%,#19191d 48%,#16171b 56%)"></div>
<div class="abs" style="left:0;top:0;width:336px;height:110px;background:linear-gradient(180deg,#16171b 0%,rgba(22,23,27,.92) 35%,rgba(22,23,27,0) 100%)"></div>
<div class="abs" style="left:0;top:600px;width:336px;height:75px;background:linear-gradient(0deg,rgba(22,23,27,.85) 0%,rgba(22,23,27,0) 100%)"></div>
<div class="abs" style="left:21px;top:18px;font-size:19.6px;font-weight:700;line-height:26px;color:#fff">Arrange</div>
<svg class="abs" style="left:283px;top:21px" width="22" height="22" viewBox="0 0 22 22"><path class="ic" d="M4.4 4.4 L17.6 17.6 M17.6 4.4 L4.4 17.6" style="stroke-width:1.5;stroke:#d8d8da"/></svg>
<div class="abs" style="left:21px;top:61px;width:295px;height:1px;background:rgba(255,255,255,.1)"></div>
<div class="albl" style="top:82px">Layers</div>
<div class="arow" style="left:67.5px;top:118.5px">Forward</div>
<div class="arow" style="left:220.5px;top:118.5px">Backward</div>
<div class="arow" style="left:67.5px;top:164.5px">To front</div>
<div class="arow" style="left:220.5px;top:164.5px">To back</div>
<div class="albl" style="top:216px">Align to page</div>
<div class="arow" style="left:67.5px;top:255px">Top</div>
<div class="arow" style="left:220.5px;top:255px">Left</div>
<div class="arow" style="left:67.5px;top:301px">Middle</div>
<div class="arow" style="left:220.5px;top:301px">Center</div>
<div class="arow" style="left:67.5px;top:348px">Bottom</div>
<div class="arow" style="left:220.5px;top:348px">Right</div>
<svg class="abs" style="left:0;top:0" width="336" height="675" viewBox="1371 153 336 675">
<g class="ic" style="stroke-width:1.7;stroke:#f4f4f5">
<!-- forward -->
<path d="M1414.5 284.5 V274 M1411.3 277 L1414.5 273.8 L1417.7 277 M1410.6 281.4 L1406.4 285.8 L1414.5 292.6 L1422.6 285.8 L1418.4 281.4"/>
<!-- backward -->
<path d="M1567.5 282 V292.4 M1564.3 289.4 L1567.5 292.6 L1570.7 289.4 M1563.4 286.6 L1559.4 283 L1567.5 275.4 L1575.6 283 L1571.6 286.6"/>
<!-- to front -->
<path d="M1414.5 328.4 V318.4 M1411.3 321.4 L1414.5 318.2 L1417.7 321.4 M1410.8 325.6 L1406.6 329.2 L1414.5 335.4 L1422.4 329.2 L1418.2 325.6 M1406.6 334 L1414.5 340.2 L1422.4 334"/>
<!-- to back -->
<path d="M1567.5 329.8 V340 M1564.3 337 L1567.5 340.2 L1570.7 337 M1563.4 334 L1559.6 330.6 L1567.5 324.2 L1575.4 330.6 L1571.6 334 M1559.6 325.6 L1567.5 319.2 L1575.4 325.6"/>
<!-- top -->
<path d="M1406.4 411.4 H1422.6"/><rect x="1411" y="415.6" width="7" height="12.4" rx="1"/>
<!-- left -->
<path d="M1559 411 V430"/><rect x="1563" y="416.4" width="12.4" height="7" rx="1"/>
<!-- middle -->
<path d="M1405.8 466 H1410.8 M1418.2 466 H1423.2"/><rect x="1411" y="459.6" width="7" height="13" rx="1"/>
<!-- center -->
<path d="M1567.5 458.4 V461.6 M1567.5 470.4 V473.6"/><rect x="1561" y="461.6" width="13" height="8.8" rx="1"/>
<!-- bottom -->
<path d="M1406.4 522.6 H1422.6"/><rect x="1411" y="505.6" width="7" height="12.4" rx="1"/>
<!-- right -->
<path d="M1576 504 V523"/><rect x="1559.6" y="510" width="12.4" height="7" rx="1"/>
</g>
</svg>
<div class="albl" style="top:398px">Size</div>
<div class="ainp" style="left:21px;top:427px">217.2<b>W</b></div>
<div class="ainp" style="left:174px;top:427px;width:142px;color:#55565c;background:rgba(255,255,255,.085)">90.1<b style="color:#5d5e64">H</b></div>
<div class="abs" style="left:160px;top:436px;width:17px;height:22px;border-radius:4px;background:#26272b"><svg width="17" height="22" viewBox="0 0 17 22"><rect class="ic" x="5.8" y="5" width="5.4" height="10.6" rx="2.7" style="stroke-width:1.2;stroke:#d0d0d4"/><path d="M4.6 10.3 H12.4" stroke="#26272b" stroke-width="2.6"/></svg></div>
<div class="albl" style="top:493px">Position</div>
<div class="ainp" style="left:21px;top:521.5px">807<b>X</b></div>
<div class="ainp" style="left:174px;top:521.5px;width:142px;background:rgba(255,255,255,.085)">314<b>Y</b></div>
<div class="albl" style="top:587px">Rotate</div>
<div class="ainp" style="left:21px;top:616.5px">5°</div>
</div>
<!-- side tab -->
<div class="abs" style="left:1716px;top:153px;width:70px;height:284px;border-radius:16px;background:#16171b;box-shadow:0 0 0 1px rgba(255,255,255,.04)">
<div class="abs" style="left:5px;top:215px;width:60px;height:65px;border-radius:11px;background:#36373d"></div>
<svg class="abs" style="left:0;top:0" width="70" height="284" viewBox="1716 153 70 284">
<g class="ic" style="stroke-width:1.8;stroke:#b9b9be">
<path d="M1741.6 176.4 V173 H1759.4 V176.4 M1750.5 173 V189.6 M1747.2 189.6 H1753.8" stroke-width="1.9"/>
<path d="M1759 249 V244.4 A2.4 2.4 0 0 0 1756.6 242 H1744.4 A2.4 2.4 0 0 0 1742 244.4 V256 A2.4 2.4 0 0 0 1744.4 258.4 H1750"/>
<path d="M1750.5 311.4 C1746.6 316 1743.6 319.4 1743.6 323 A6.9 6.9 0 0 0 1757.4 323 C1757.4 319.4 1754.4 316 1750.5 311.4 Z"/>
</g>
<path d="M1756.4 251 l1.5 3.2 l3.5 .4 l-2.6 2.4 l.7 3.5 l-3.1 -1.8 l-3.1 1.8 l.7 -3.5 l-2.6 -2.4 l3.5 -.4Z" fill="#b9b9be"/>
<path d="M1750.8 315.6 C1753.6 319 1754.8 320.8 1754.8 323 A4.3 4.3 0 0 1 1750.8 327.3Z" fill="#8d8d92"/>
<g class="ic" style="stroke-width:1.9;stroke:#fff"><path d="M1741 387 V384.6 A3 3 0 0 1 1744 381.6 H1746.4 M1754.6 381.6 H1757 A3 3 0 0 1 1760 384.6 V387 M1760 395 V397.4 A3 3 0 0 1 1757 400.4 H1754.6 M1746.4 400.4 H1744 A3 3 0 0 1 1741 397.4 V395 M1749 381.6 H1752 M1749 400.4 H1752 M1741 389.6 V392.4 M1760 389.6 V392.4"/></g>
<rect x="1746.6" y="387.2" width="7.8" height="7.8" rx="1.8" fill="#d4d4d8"/>
</svg>
<div class="stab" style="top:43.5px">Basic</div>
<div class="stab" style="top:113.5px">Presets</div>
<div class="stab" style="top:183.5px">Opacity</div>
<div class="stab" style="top:253.5px;color:#fff">Arrange</div>
</div>
<div id="layers" class="abs">
<div class="abs" style="left:19px;top:12.5px;font-size:16.8px;font-weight:700;line-height:24px;color:#fff">Layers</div>
<div class="lt" style="top:49px"><i></i><div class="abs" style="left:4px;top:4px;width:75px;height:62px;overflow:hidden"><svg class="abs" style="left:0;top:0" width="75" height="62" viewBox="0 0 75 62"><path d="M37.4 11 Q39.4 27 47 31.6 Q39.4 36 37.4 54 Q35.4 36 28 31.6 Q35.4 27 37.4 11Z" fill="#d50b3b"/></svg></div></div>
<div class="lt" style="top:129px"><i></i><div class="abs" style="left:4px;top:4px;width:75px;height:62px;overflow:hidden"><svg class="abs" style="left:0;top:0" width="75" height="62" viewBox="0 0 75 62"><path d="M37.4 11 Q39.4 27 47 31.6 Q39.4 36 37.4 54 Q35.4 36 28 31.6 Q35.4 27 37.4 11Z" fill="#d50b3b"/></svg></div></div>
<div class="lt" style="top:209px"><i></i><div class="abs" style="left:4px;top:4px;width:75px;height:62px;overflow:hidden"><svg class="abs" style="left:0;top:0" width="75" height="62" viewBox="0 0 75 62"><path d="M37.4 11 Q39.4 27 47 31.6 Q39.4 36 37.4 54 Q35.4 36 28 31.6 Q35.4 27 37.4 11Z" fill="#d50b3b"/></svg></div></div>
<div class="lt" style="top:289px"><i></i><div class="abs" style="left:4px;top:4px;width:75px;height:62px;overflow:hidden"><svg class="abs" style="left:0;top:0" width="75" height="62" viewBox="0 0 75 62"><path d="M37.4 11 Q39.4 27 47 31.6 Q39.4 36 37.4 54 Q35.4 36 28 31.6 Q35.4 27 37.4 11Z" fill="#d50b3b"/></svg></div></div>
<div class="lt" style="top:369px"><i></i><div class="abs" style="left:4px;top:4px;width:75px;height:62px;overflow:hidden"><svg class="abs" style="left:0;top:0" width="75" height="62" viewBox="0 0 75 62"><text x="37.5" y="36" font-family="Liberation Sans,sans-serif" font-size="12.6" font-weight="700" font-style="italic" fill="#d50b3b" stroke="#d50b3b" stroke-width="1" stroke-linejoin="round" text-anchor="middle" textLength="54" lengthAdjust="spacingAndGlyphs">JOIN US!</text></svg></div></div>
<div class="lt" style="top:449px"><i></i><div class="abs" style="left:4px;top:4px;width:75px;height:62px;overflow:hidden"><svg class="abs" style="left:0;top:0" width="75" height="62" viewBox="0 0 75 62"><rect x="4" y="23.4" width="67" height="17" rx="6.5" fill="#fdeeed" stroke="#d50b3b" stroke-width="1.7"/></svg></div></div>
<div class="lt" style="top:529px"><i></i><div class="abs" style="left:4px;top:4px;width:75px;height:62px;overflow:hidden"><svg class="abs" style="left:0;top:0" width="75" height="62" viewBox="0 0 75 62"><text x="37.5" y="33.6" font-family="Liberation Sans,sans-serif" font-size="6" font-weight="700" fill="#fdf2f1" stroke="#fdf2f1" stroke-width=".5" text-anchor="middle" textLength="64" lengthAdjust="spacingAndGlyphs">123 ANYWHERE ST, 45</text></svg></div></div>
<div class="lt" style="top:609px"><i></i><div class="abs" style="left:4px;top:4px;width:75px;height:62px;overflow:hidden"><svg class="abs" style="left:0;top:0" width="75" height="62" viewBox="0 0 75 62"><path d="M37.5 4 a21 21 0 0 1 21 21 c0 14 -13 22 -21 35 c-8 -13 -21 -21 -21 -35 a21 21 0 0 1 21 -21Z M37.5 18.4 a6.6 6.6 0 1 0 0.01 0Z" fill="#f1e6e5" fill-rule="evenodd"/></svg></div></div>
<div class="lt" style="top:689px"><i></i><div class="abs" style="left:4px;top:4px;width:75px;height:62px;overflow:hidden"><svg class="abs" style="left:0;top:0" width="75" height="62" viewBox="0 0 75 62"><text x="37.5" y="33.6" font-family="Liberation Sans,sans-serif" font-size="6.4" font-weight="700" fill="#fdf2f1" stroke="#fdf2f1" stroke-width=".5" text-anchor="middle" textLength="64" lengthAdjust="spacingAndGlyphs">WWW.CAPCUT.COM</text></svg></div></div>
<div class="lt" style="top:769px"><i></i><div class="abs" style="left:4px;top:4px;width:75px;height:62px;overflow:hidden"><svg class="abs" style="left:0;top:0" width="75" height="62" viewBox="0 0 75 62"><g fill="none" stroke="#fdeceb" stroke-width="2.7"><circle cx="37.5" cy="31" r="26.5"/><ellipse cx="37.5" cy="31" rx="11.5" ry="26.5"/><path d="M11 31 H64 M15 17 H60 M15 45 H60 M37.5 4.5 V57.5"/></g></svg></div></div>
<div class="lt" style="top:849px"><i></i><div class="abs" style="left:4px;top:4px;width:75px;height:62px;overflow:hidden"><svg class="abs" style="left:0;top:0" width="75" height="62" viewBox="0 0 75 62"><rect x="4" y="29.4" width="67" height="3.4" fill="#d50b3b"/></svg></div></div>
</div>
</body>
</html>
